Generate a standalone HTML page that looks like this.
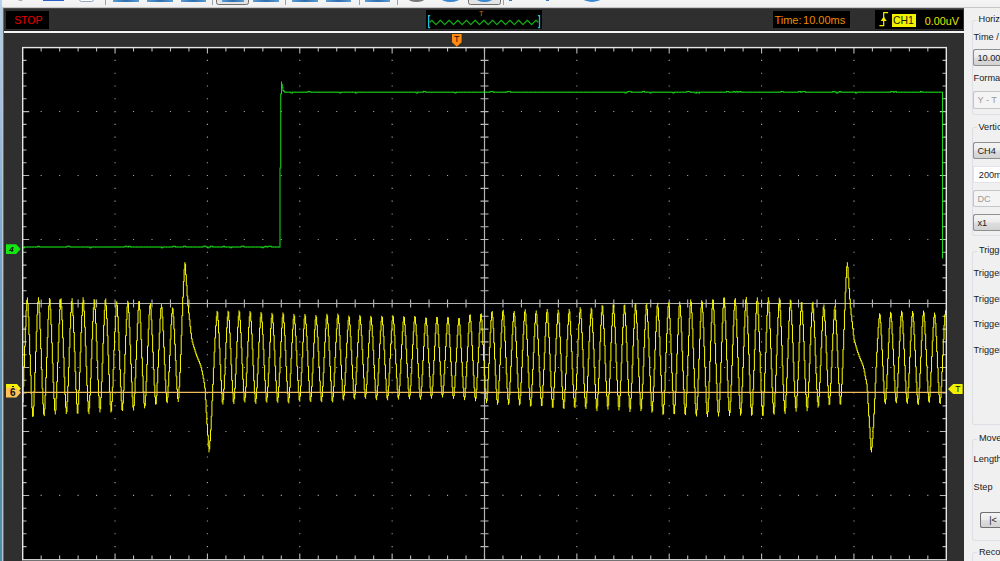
<!DOCTYPE html>
<html lang="en">
<head>
<meta charset="utf-8">
<title>Oscilloscope</title>
<style>
html,body{margin:0;padding:0;}
body{width:1000px;height:561px;overflow:hidden;background:#2f2f2f;position:relative;
 font-family:"Liberation Sans",sans-serif;font-size:9px;color:#000;}
.abs{position:absolute;}
#toolbar{left:0;top:0;width:1000px;height:9px;background:linear-gradient(#f5f5f5 0,#efefef 6.7px,#bdbdbd 7.7px,#4a4a4a 8.5px,#2f2f2f 9px);}
#toolbar i{position:absolute;display:block;}
#leftedge{left:0;top:0;width:2.0px;height:561px;background:linear-gradient(#b4d2ee 0%,#9cc0e2 20%,#78a4cc 45%,#5a94b4 70%,#4a8ea6 100%);}
#leftline{left:2.0px;top:8px;width:1.2px;height:553px;background:#bcc6ce;}
#leftline2{left:3.2px;top:8px;width:0.9px;height:553px;background:#686868;}
#hline{left:4px;top:31.4px;width:960px;height:1.6px;background:#f4f4f4;box-shadow:0 -0.7px 0 #1c1c1c;}
.blk{background:#000;}
#stop{left:5.9px;top:10.5px;width:43.3px;height:18.2px;}
#stop span{position:absolute;left:8.4px;top:3.4px;font-size:10.5px;line-height:12px;color:#e80000;letter-spacing:-0.1px;}
#mini{left:426px;top:9.6px;width:116px;height:19.3px;}
#mini span{position:absolute;left:52.9px;top:0.6px;font-size:7.2px;line-height:8px;color:#e06800;}
#time{left:772.5px;top:10.5px;width:77.5px;height:17.8px;}
#time span{position:absolute;left:1.9px;top:3.6px;font-size:11px;line-height:12px;color:#ee8a00;white-space:pre;}
#time span b{font-weight:normal;margin-left:1.6px;}
#trig{left:875px;top:9.7px;width:87.6px;height:19.4px;}
#ch1{left:16.6px;top:4.4px;width:24px;height:13px;background:#f2f200;}
#ch1 span{position:absolute;left:1.3px;top:0.9px;font-size:10.4px;line-height:12px;color:#202000;}
#uv{left:49.8px;top:5.3px;font-size:10.8px;line-height:12px;color:#e6e600;}
.mk{font-size:8px;line-height:9px;font-weight:bold;color:#101010;}
#panel{left:964.4px;top:8px;width:36px;height:553px;background:#f0f0f0;}
#pedge{left:963.6px;top:8px;width:2.6px;height:553px;background:linear-gradient(90deg,#9a9a9a,#fdfdfd 40%,#fdfdfd 70%,#f0f0f0);}
.grp{border:1px solid #dce0e4;border-right:none;border-radius:3px 0 0 3px;left:971.6px;width:40px;}
.lg{background:#f0f0f0;padding:0 1.5px;font-size:9.2px;line-height:10px;color:#1a1a1a;white-space:nowrap;}
.lb{font-size:9.2px;line-height:10px;color:#1a1a1a;white-space:nowrap;left:973.6px;}
.cb{left:973.2px;width:40px;height:17.6px;border:1px solid #8e8f8f;border-right:none;border-radius:2.5px 0 0 2.5px;
 background:linear-gradient(#f4f4f4 0%,#ececec 48%,#dedede 52%,#d2d2d2 100%);box-sizing:border-box;}
.cb span,.tf span{position:absolute;left:3.2px;top:3.1px;font-size:9.2px;line-height:10px;color:#1a1a1a;white-space:nowrap;}
.tf{left:973.2px;width:40px;height:16.8px;border:1px solid #e2e3ea;border-right:none;border-radius:2px 0 0 2px;background:#fff;box-sizing:border-box;}
.dis{left:973.2px;width:40px;height:17.6px;border:1px solid #c4c6c8;border-right:none;border-radius:2.5px 0 0 2.5px;background:#f4f4f4;box-sizing:border-box;}
.dis span{position:absolute;left:3.2px;top:3.2px;font-size:9.2px;line-height:10px;color:#9a9a9a;white-space:nowrap;}
</style>
</head>
<body>
<div id="toolbar" class="abs">
 <i style="left:17.5px;top:-2.6px;width:5px;height:4px;border-radius:50%;background:#a3a595;"></i>
 <i style="left:42.5px;top:0;width:21.5px;height:0.9px;background:#2f5fc8;"></i>
 <i style="left:79px;top:-3px;width:15.4px;height:4.6px;border:1px solid #93a5c0;border-radius:2.5px;box-sizing:border-box;background:#fff;"></i>
 <i style="left:105.4px;top:0;width:0.9px;height:4.6px;background:#a0a0a0;"></i>
 <i class="bi" style="left:112.5px;width:26px;"></i>
 <i class="bi" style="left:147px;width:25.5px;"></i>
 <i class="bi" style="left:180.5px;width:25.5px;"></i>
 <i style="left:212.3px;top:0;width:0.9px;height:4.6px;background:#a0a0a0;"></i>
 <i style="left:216px;top:-3px;width:32.8px;height:8.4px;border:1px solid #6e6e6e;border-radius:2.5px;box-sizing:border-box;background:#e4e4e4;"></i>
 <i class="bi" style="left:221.5px;width:22px;"></i>
 <i class="bi" style="left:253px;width:25.5px;"></i>
 <i style="left:284.8px;top:0;width:0.9px;height:4.6px;background:#a0a0a0;"></i>
 <i class="bi" style="left:292px;width:25.5px;"></i>
 <i class="bi" style="left:326px;width:25px;"></i>
 <i style="left:358.5px;top:0;width:0.9px;height:4.6px;background:#a0a0a0;"></i>
 <i class="bi" style="left:365px;width:25px;"></i>
 <i style="left:397px;top:0;width:0.9px;height:4.6px;background:#a0a0a0;"></i>
 <i style="left:407.5px;top:-6px;width:17.5px;height:7.6px;border-radius:50%;background:#767676;"></i>
 <i style="left:441px;top:-6px;width:19px;height:8.1px;border-radius:50%;background:#3a86d0;"></i>
 <i style="left:467.5px;top:-3px;width:33px;height:8.4px;border:1px solid #6e6e6e;border-radius:2.5px;box-sizing:border-box;background:#e4e4e4;"></i>
 <i style="left:476px;top:-6px;width:17px;height:8.1px;border-radius:50%;background:#3a86d0;"></i>
 <i style="left:503px;top:0;width:0.9px;height:4.6px;background:#a0a0a0;"></i>
 <i style="left:509px;top:0;width:3px;height:1.2px;background:#3a78c0;"></i>
 <i style="left:546px;top:0;width:3px;height:1.2px;background:#3a78c0;"></i>
 <i style="left:582.5px;top:-6px;width:18.5px;height:8.1px;border-radius:50%;background:#3a86d0;"></i>
</div>
<style>.bi{top:0;height:1.9px;background:linear-gradient(90deg,#5d9bd3,#2f6eb0 50%,#5d9bd3);}</style>
<div id="leftedge" class="abs"></div>
<div id="leftline" class="abs"></div>
<div id="leftline2" class="abs"></div>
<div id="hline" class="abs"></div>
<div id="stop" class="abs blk"><span>STOP</span></div>
<div id="mini" class="abs blk"><span>T</span></div>
<div id="time" class="abs blk"><span>Time:<b>10.00ms</b></span></div>
<div id="trig" class="abs blk">
 <div id="ch1" class="abs"><span>CH1</span></div>
 <div id="uv" class="abs">0.00uV</div>
</div>
<div class="abs" style="left:0;top:0;width:1000px;height:561px;">
<svg id="scope" width="1000" height="561" viewBox="0 0 1000 561">
<defs><clipPath id="pc"><rect x="22.7" y="47.6" width="923.6" height="511.8"/></clipPath></defs>
<rect x="22.7" y="47.6" width="923.6" height="513.4" fill="#000"/>
<path d="M114.51 60.39h1.1M114.51 73.19h1.1M114.51 85.98h1.1M114.51 98.78h1.1M114.51 111.58h1.1M114.51 124.37h1.1M114.51 137.16h1.1M114.51 149.96h1.1M114.51 162.75h1.1M114.51 175.55h1.1M114.51 188.34h1.1M114.51 201.14h1.1M114.51 213.93h1.1M114.51 226.73h1.1M114.51 239.52h1.1M114.51 252.32h1.1M114.51 265.11h1.1M114.51 277.91h1.1M114.51 290.7h1.1M114.51 303.5h1.1M114.51 316.3h1.1M114.51 329.09h1.1M114.51 341.88h1.1M114.51 354.68h1.1M114.51 367.47h1.1M114.51 380.27h1.1M114.51 393.06h1.1M114.51 405.86h1.1M114.51 418.65h1.1M114.51 431.45h1.1M114.51 444.25h1.1M114.51 457.04h1.1M114.51 469.83h1.1M114.51 482.63h1.1M114.51 495.43h1.1M114.51 508.22h1.1M114.51 521.01h1.1M114.51 533.81h1.1M114.51 546.6h1.1M206.87 60.39h1.1M206.87 73.19h1.1M206.87 85.98h1.1M206.87 98.78h1.1M206.87 111.58h1.1M206.87 124.37h1.1M206.87 137.16h1.1M206.87 149.96h1.1M206.87 162.75h1.1M206.87 175.55h1.1M206.87 188.34h1.1M206.87 201.14h1.1M206.87 213.93h1.1M206.87 226.73h1.1M206.87 239.52h1.1M206.87 252.32h1.1M206.87 265.11h1.1M206.87 277.91h1.1M206.87 290.7h1.1M206.87 303.5h1.1M206.87 316.3h1.1M206.87 329.09h1.1M206.87 341.88h1.1M206.87 354.68h1.1M206.87 367.47h1.1M206.87 380.27h1.1M206.87 393.06h1.1M206.87 405.86h1.1M206.87 418.65h1.1M206.87 431.45h1.1M206.87 444.25h1.1M206.87 457.04h1.1M206.87 469.83h1.1M206.87 482.63h1.1M206.87 495.43h1.1M206.87 508.22h1.1M206.87 521.01h1.1M206.87 533.81h1.1M206.87 546.6h1.1M299.23 60.39h1.1M299.23 73.19h1.1M299.23 85.98h1.1M299.23 98.78h1.1M299.23 111.58h1.1M299.23 124.37h1.1M299.23 137.16h1.1M299.23 149.96h1.1M299.23 162.75h1.1M299.23 175.55h1.1M299.23 188.34h1.1M299.23 201.14h1.1M299.23 213.93h1.1M299.23 226.73h1.1M299.23 239.52h1.1M299.23 252.32h1.1M299.23 265.11h1.1M299.23 277.91h1.1M299.23 290.7h1.1M299.23 303.5h1.1M299.23 316.3h1.1M299.23 329.09h1.1M299.23 341.88h1.1M299.23 354.68h1.1M299.23 367.47h1.1M299.23 380.27h1.1M299.23 393.06h1.1M299.23 405.86h1.1M299.23 418.65h1.1M299.23 431.45h1.1M299.23 444.25h1.1M299.23 457.04h1.1M299.23 469.83h1.1M299.23 482.63h1.1M299.23 495.43h1.1M299.23 508.22h1.1M299.23 521.01h1.1M299.23 533.81h1.1M299.23 546.6h1.1M391.59 60.39h1.1M391.59 73.19h1.1M391.59 85.98h1.1M391.59 98.78h1.1M391.59 111.58h1.1M391.59 124.37h1.1M391.59 137.16h1.1M391.59 149.96h1.1M391.59 162.75h1.1M391.59 175.55h1.1M391.59 188.34h1.1M391.59 201.14h1.1M391.59 213.93h1.1M391.59 226.73h1.1M391.59 239.52h1.1M391.59 252.32h1.1M391.59 265.11h1.1M391.59 277.91h1.1M391.59 290.7h1.1M391.59 303.5h1.1M391.59 316.3h1.1M391.59 329.09h1.1M391.59 341.88h1.1M391.59 354.68h1.1M391.59 367.47h1.1M391.59 380.27h1.1M391.59 393.06h1.1M391.59 405.86h1.1M391.59 418.65h1.1M391.59 431.45h1.1M391.59 444.25h1.1M391.59 457.04h1.1M391.59 469.83h1.1M391.59 482.63h1.1M391.59 495.43h1.1M391.59 508.22h1.1M391.59 521.01h1.1M391.59 533.81h1.1M391.59 546.6h1.1M576.31 60.39h1.1M576.31 73.19h1.1M576.31 85.98h1.1M576.31 98.78h1.1M576.31 111.58h1.1M576.31 124.37h1.1M576.31 137.16h1.1M576.31 149.96h1.1M576.31 162.75h1.1M576.31 175.55h1.1M576.31 188.34h1.1M576.31 201.14h1.1M576.31 213.93h1.1M576.31 226.73h1.1M576.31 239.52h1.1M576.31 252.32h1.1M576.31 265.11h1.1M576.31 277.91h1.1M576.31 290.7h1.1M576.31 303.5h1.1M576.31 316.3h1.1M576.31 329.09h1.1M576.31 341.88h1.1M576.31 354.68h1.1M576.31 367.47h1.1M576.31 380.27h1.1M576.31 393.06h1.1M576.31 405.86h1.1M576.31 418.65h1.1M576.31 431.45h1.1M576.31 444.25h1.1M576.31 457.04h1.1M576.31 469.83h1.1M576.31 482.63h1.1M576.31 495.43h1.1M576.31 508.22h1.1M576.31 521.01h1.1M576.31 533.81h1.1M576.31 546.6h1.1M668.67 60.39h1.1M668.67 73.19h1.1M668.67 85.98h1.1M668.67 98.78h1.1M668.67 111.58h1.1M668.67 124.37h1.1M668.67 137.16h1.1M668.67 149.96h1.1M668.67 162.75h1.1M668.67 175.55h1.1M668.67 188.34h1.1M668.67 201.14h1.1M668.67 213.93h1.1M668.67 226.73h1.1M668.67 239.52h1.1M668.67 252.32h1.1M668.67 265.11h1.1M668.67 277.91h1.1M668.67 290.7h1.1M668.67 303.5h1.1M668.67 316.3h1.1M668.67 329.09h1.1M668.67 341.88h1.1M668.67 354.68h1.1M668.67 367.47h1.1M668.67 380.27h1.1M668.67 393.06h1.1M668.67 405.86h1.1M668.67 418.65h1.1M668.67 431.45h1.1M668.67 444.25h1.1M668.67 457.04h1.1M668.67 469.83h1.1M668.67 482.63h1.1M668.67 495.43h1.1M668.67 508.22h1.1M668.67 521.01h1.1M668.67 533.81h1.1M668.67 546.6h1.1M761.03 60.39h1.1M761.03 73.19h1.1M761.03 85.98h1.1M761.03 98.78h1.1M761.03 111.58h1.1M761.03 124.37h1.1M761.03 137.16h1.1M761.03 149.96h1.1M761.03 162.75h1.1M761.03 175.55h1.1M761.03 188.34h1.1M761.03 201.14h1.1M761.03 213.93h1.1M761.03 226.73h1.1M761.03 239.52h1.1M761.03 252.32h1.1M761.03 265.11h1.1M761.03 277.91h1.1M761.03 290.7h1.1M761.03 303.5h1.1M761.03 316.3h1.1M761.03 329.09h1.1M761.03 341.88h1.1M761.03 354.68h1.1M761.03 367.47h1.1M761.03 380.27h1.1M761.03 393.06h1.1M761.03 405.86h1.1M761.03 418.65h1.1M761.03 431.45h1.1M761.03 444.25h1.1M761.03 457.04h1.1M761.03 469.83h1.1M761.03 482.63h1.1M761.03 495.43h1.1M761.03 508.22h1.1M761.03 521.01h1.1M761.03 533.81h1.1M761.03 546.6h1.1M853.39 60.39h1.1M853.39 73.19h1.1M853.39 85.98h1.1M853.39 98.78h1.1M853.39 111.58h1.1M853.39 124.37h1.1M853.39 137.16h1.1M853.39 149.96h1.1M853.39 162.75h1.1M853.39 175.55h1.1M853.39 188.34h1.1M853.39 201.14h1.1M853.39 213.93h1.1M853.39 226.73h1.1M853.39 239.52h1.1M853.39 252.32h1.1M853.39 265.11h1.1M853.39 277.91h1.1M853.39 290.7h1.1M853.39 303.5h1.1M853.39 316.3h1.1M853.39 329.09h1.1M853.39 341.88h1.1M853.39 354.68h1.1M853.39 367.47h1.1M853.39 380.27h1.1M853.39 393.06h1.1M853.39 405.86h1.1M853.39 418.65h1.1M853.39 431.45h1.1M853.39 444.25h1.1M853.39 457.04h1.1M853.39 469.83h1.1M853.39 482.63h1.1M853.39 495.43h1.1M853.39 508.22h1.1M853.39 521.01h1.1M853.39 533.81h1.1M853.39 546.6h1.1M40.62 111.57h1.1M59.09 111.57h1.1M77.57 111.57h1.1M96.04 111.57h1.1M132.98 111.57h1.1M151.45 111.57h1.1M169.93 111.57h1.1M188.4 111.57h1.1M225.34 111.57h1.1M243.81 111.57h1.1M262.29 111.57h1.1M280.76 111.57h1.1M317.7 111.57h1.1M336.17 111.57h1.1M354.65 111.57h1.1M373.12 111.57h1.1M410.06 111.57h1.1M428.53 111.57h1.1M447.01 111.57h1.1M465.48 111.57h1.1M502.42 111.57h1.1M520.89 111.57h1.1M539.37 111.57h1.1M557.84 111.57h1.1M594.78 111.57h1.1M613.25 111.57h1.1M631.73 111.57h1.1M650.2 111.57h1.1M687.14 111.57h1.1M705.61 111.57h1.1M724.09 111.57h1.1M742.56 111.57h1.1M779.5 111.57h1.1M797.97 111.57h1.1M816.45 111.57h1.1M834.92 111.57h1.1M871.86 111.57h1.1M890.33 111.57h1.1M908.81 111.57h1.1M927.28 111.57h1.1M40.62 175.55h1.1M59.09 175.55h1.1M77.57 175.55h1.1M96.04 175.55h1.1M132.98 175.55h1.1M151.45 175.55h1.1M169.93 175.55h1.1M188.4 175.55h1.1M225.34 175.55h1.1M243.81 175.55h1.1M262.29 175.55h1.1M280.76 175.55h1.1M317.7 175.55h1.1M336.17 175.55h1.1M354.65 175.55h1.1M373.12 175.55h1.1M410.06 175.55h1.1M428.53 175.55h1.1M447.01 175.55h1.1M465.48 175.55h1.1M502.42 175.55h1.1M520.89 175.55h1.1M539.37 175.55h1.1M557.84 175.55h1.1M594.78 175.55h1.1M613.25 175.55h1.1M631.73 175.55h1.1M650.2 175.55h1.1M687.14 175.55h1.1M705.61 175.55h1.1M724.09 175.55h1.1M742.56 175.55h1.1M779.5 175.55h1.1M797.97 175.55h1.1M816.45 175.55h1.1M834.92 175.55h1.1M871.86 175.55h1.1M890.33 175.55h1.1M908.81 175.55h1.1M927.28 175.55h1.1M40.62 239.52h1.1M59.09 239.52h1.1M77.57 239.52h1.1M96.04 239.52h1.1M132.98 239.52h1.1M151.45 239.52h1.1M169.93 239.52h1.1M188.4 239.52h1.1M225.34 239.52h1.1M243.81 239.52h1.1M262.29 239.52h1.1M280.76 239.52h1.1M317.7 239.52h1.1M336.17 239.52h1.1M354.65 239.52h1.1M373.12 239.52h1.1M410.06 239.52h1.1M428.53 239.52h1.1M447.01 239.52h1.1M465.48 239.52h1.1M502.42 239.52h1.1M520.89 239.52h1.1M539.37 239.52h1.1M557.84 239.52h1.1M594.78 239.52h1.1M613.25 239.52h1.1M631.73 239.52h1.1M650.2 239.52h1.1M687.14 239.52h1.1M705.61 239.52h1.1M724.09 239.52h1.1M742.56 239.52h1.1M779.5 239.52h1.1M797.97 239.52h1.1M816.45 239.52h1.1M834.92 239.52h1.1M871.86 239.52h1.1M890.33 239.52h1.1M908.81 239.52h1.1M927.28 239.52h1.1M40.62 367.48h1.1M59.09 367.48h1.1M77.57 367.48h1.1M96.04 367.48h1.1M132.98 367.48h1.1M151.45 367.48h1.1M169.93 367.48h1.1M188.4 367.48h1.1M225.34 367.48h1.1M243.81 367.48h1.1M262.29 367.48h1.1M280.76 367.48h1.1M317.7 367.48h1.1M336.17 367.48h1.1M354.65 367.48h1.1M373.12 367.48h1.1M410.06 367.48h1.1M428.53 367.48h1.1M447.01 367.48h1.1M465.48 367.48h1.1M502.42 367.48h1.1M520.89 367.48h1.1M539.37 367.48h1.1M557.84 367.48h1.1M594.78 367.48h1.1M613.25 367.48h1.1M631.73 367.48h1.1M650.2 367.48h1.1M687.14 367.48h1.1M705.61 367.48h1.1M724.09 367.48h1.1M742.56 367.48h1.1M779.5 367.48h1.1M797.97 367.48h1.1M816.45 367.48h1.1M834.92 367.48h1.1M871.86 367.48h1.1M890.33 367.48h1.1M908.81 367.48h1.1M927.28 367.48h1.1M40.62 431.45h1.1M59.09 431.45h1.1M77.57 431.45h1.1M96.04 431.45h1.1M132.98 431.45h1.1M151.45 431.45h1.1M169.93 431.45h1.1M188.4 431.45h1.1M225.34 431.45h1.1M243.81 431.45h1.1M262.29 431.45h1.1M280.76 431.45h1.1M317.7 431.45h1.1M336.17 431.45h1.1M354.65 431.45h1.1M373.12 431.45h1.1M410.06 431.45h1.1M428.53 431.45h1.1M447.01 431.45h1.1M465.48 431.45h1.1M502.42 431.45h1.1M520.89 431.45h1.1M539.37 431.45h1.1M557.84 431.45h1.1M594.78 431.45h1.1M613.25 431.45h1.1M631.73 431.45h1.1M650.2 431.45h1.1M687.14 431.45h1.1M705.61 431.45h1.1M724.09 431.45h1.1M742.56 431.45h1.1M779.5 431.45h1.1M797.97 431.45h1.1M816.45 431.45h1.1M834.92 431.45h1.1M871.86 431.45h1.1M890.33 431.45h1.1M908.81 431.45h1.1M927.28 431.45h1.1M40.62 495.42h1.1M59.09 495.42h1.1M77.57 495.42h1.1M96.04 495.42h1.1M132.98 495.42h1.1M151.45 495.42h1.1M169.93 495.42h1.1M188.4 495.42h1.1M225.34 495.42h1.1M243.81 495.42h1.1M262.29 495.42h1.1M280.76 495.42h1.1M317.7 495.42h1.1M336.17 495.42h1.1M354.65 495.42h1.1M373.12 495.42h1.1M410.06 495.42h1.1M428.53 495.42h1.1M447.01 495.42h1.1M465.48 495.42h1.1M502.42 495.42h1.1M520.89 495.42h1.1M539.37 495.42h1.1M557.84 495.42h1.1M594.78 495.42h1.1M613.25 495.42h1.1M631.73 495.42h1.1M650.2 495.42h1.1M687.14 495.42h1.1M705.61 495.42h1.1M724.09 495.42h1.1M742.56 495.42h1.1M779.5 495.42h1.1M797.97 495.42h1.1M816.45 495.42h1.1M834.92 495.42h1.1M871.86 495.42h1.1M890.33 495.42h1.1M908.81 495.42h1.1M927.28 495.42h1.1" stroke="#a8a8a8" stroke-width="1.1" fill="none"/>
<path d="M22.7 303.5H946.3M484.5 47.6V559.4" stroke="#b4b4b4" stroke-width="1.2" fill="none"/>
<path d="M41.17 47.6v3.8M41.17 559.4v-3.8M41.17 299.5v8M59.64 47.6v3.8M59.64 559.4v-3.8M59.64 299.5v8M78.12 47.6v3.8M78.12 559.4v-3.8M78.12 299.5v8M96.59 47.6v3.8M96.59 559.4v-3.8M96.59 299.5v8M115.06 47.6v6M115.06 559.4v-6M115.06 299.5v8M133.53 47.6v3.8M133.53 559.4v-3.8M133.53 299.5v8M152 47.6v3.8M152 559.4v-3.8M152 299.5v8M170.48 47.6v3.8M170.48 559.4v-3.8M170.48 299.5v8M188.95 47.6v3.8M188.95 559.4v-3.8M188.95 299.5v8M207.42 47.6v6M207.42 559.4v-6M207.42 299.5v8M225.89 47.6v3.8M225.89 559.4v-3.8M225.89 299.5v8M244.36 47.6v3.8M244.36 559.4v-3.8M244.36 299.5v8M262.84 47.6v3.8M262.84 559.4v-3.8M262.84 299.5v8M281.31 47.6v3.8M281.31 559.4v-3.8M281.31 299.5v8M299.78 47.6v6M299.78 559.4v-6M299.78 299.5v8M318.25 47.6v3.8M318.25 559.4v-3.8M318.25 299.5v8M336.72 47.6v3.8M336.72 559.4v-3.8M336.72 299.5v8M355.2 47.6v3.8M355.2 559.4v-3.8M355.2 299.5v8M373.67 47.6v3.8M373.67 559.4v-3.8M373.67 299.5v8M392.14 47.6v6M392.14 559.4v-6M392.14 299.5v8M410.61 47.6v3.8M410.61 559.4v-3.8M410.61 299.5v8M429.08 47.6v3.8M429.08 559.4v-3.8M429.08 299.5v8M447.56 47.6v3.8M447.56 559.4v-3.8M447.56 299.5v8M466.03 47.6v3.8M466.03 559.4v-3.8M466.03 299.5v8M484.5 47.6v6M484.5 559.4v-6M484.5 299.5v8M502.97 47.6v3.8M502.97 559.4v-3.8M502.97 299.5v8M521.44 47.6v3.8M521.44 559.4v-3.8M521.44 299.5v8M539.92 47.6v3.8M539.92 559.4v-3.8M539.92 299.5v8M558.39 47.6v3.8M558.39 559.4v-3.8M558.39 299.5v8M576.86 47.6v6M576.86 559.4v-6M576.86 299.5v8M595.33 47.6v3.8M595.33 559.4v-3.8M595.33 299.5v8M613.8 47.6v3.8M613.8 559.4v-3.8M613.8 299.5v8M632.28 47.6v3.8M632.28 559.4v-3.8M632.28 299.5v8M650.75 47.6v3.8M650.75 559.4v-3.8M650.75 299.5v8M669.22 47.6v6M669.22 559.4v-6M669.22 299.5v8M687.69 47.6v3.8M687.69 559.4v-3.8M687.69 299.5v8M706.16 47.6v3.8M706.16 559.4v-3.8M706.16 299.5v8M724.64 47.6v3.8M724.64 559.4v-3.8M724.64 299.5v8M743.11 47.6v3.8M743.11 559.4v-3.8M743.11 299.5v8M761.58 47.6v6M761.58 559.4v-6M761.58 299.5v8M780.05 47.6v3.8M780.05 559.4v-3.8M780.05 299.5v8M798.52 47.6v3.8M798.52 559.4v-3.8M798.52 299.5v8M817 47.6v3.8M817 559.4v-3.8M817 299.5v8M835.47 47.6v3.8M835.47 559.4v-3.8M835.47 299.5v8M853.94 47.6v6M853.94 559.4v-6M853.94 299.5v8M872.41 47.6v3.8M872.41 559.4v-3.8M872.41 299.5v8M890.88 47.6v3.8M890.88 559.4v-3.8M890.88 299.5v8M909.36 47.6v3.8M909.36 559.4v-3.8M909.36 299.5v8M927.83 47.6v3.8M927.83 559.4v-3.8M927.83 299.5v8M22.7 60.39h3.8M946.3 60.39h-3.8M480.5 60.39h8M22.7 73.19h3.8M946.3 73.19h-3.8M480.5 73.19h8M22.7 85.98h3.8M946.3 85.98h-3.8M480.5 85.98h8M22.7 98.78h3.8M946.3 98.78h-3.8M480.5 98.78h8M22.7 111.58h6.5M946.3 111.58h-6.5M480.5 111.58h8M22.7 124.37h3.8M946.3 124.37h-3.8M480.5 124.37h8M22.7 137.16h3.8M946.3 137.16h-3.8M480.5 137.16h8M22.7 149.96h3.8M946.3 149.96h-3.8M480.5 149.96h8M22.7 162.75h3.8M946.3 162.75h-3.8M480.5 162.75h8M22.7 175.55h6.5M946.3 175.55h-6.5M480.5 175.55h8M22.7 188.34h3.8M946.3 188.34h-3.8M480.5 188.34h8M22.7 201.14h3.8M946.3 201.14h-3.8M480.5 201.14h8M22.7 213.93h3.8M946.3 213.93h-3.8M480.5 213.93h8M22.7 226.73h3.8M946.3 226.73h-3.8M480.5 226.73h8M22.7 239.52h6.5M946.3 239.52h-6.5M480.5 239.52h8M22.7 252.32h3.8M946.3 252.32h-3.8M480.5 252.32h8M22.7 265.11h3.8M946.3 265.11h-3.8M480.5 265.11h8M22.7 277.91h3.8M946.3 277.91h-3.8M480.5 277.91h8M22.7 290.7h3.8M946.3 290.7h-3.8M480.5 290.7h8M22.7 303.5h6.5M946.3 303.5h-6.5M480.5 303.5h8M22.7 316.3h3.8M946.3 316.3h-3.8M480.5 316.3h8M22.7 329.09h3.8M946.3 329.09h-3.8M480.5 329.09h8M22.7 341.88h3.8M946.3 341.88h-3.8M480.5 341.88h8M22.7 354.68h3.8M946.3 354.68h-3.8M480.5 354.68h8M22.7 367.47h6.5M946.3 367.47h-6.5M480.5 367.47h8M22.7 380.27h3.8M946.3 380.27h-3.8M480.5 380.27h8M22.7 393.06h3.8M946.3 393.06h-3.8M480.5 393.06h8M22.7 405.86h3.8M946.3 405.86h-3.8M480.5 405.86h8M22.7 418.65h3.8M946.3 418.65h-3.8M480.5 418.65h8M22.7 431.45h6.5M946.3 431.45h-6.5M480.5 431.45h8M22.7 444.25h3.8M946.3 444.25h-3.8M480.5 444.25h8M22.7 457.04h3.8M946.3 457.04h-3.8M480.5 457.04h8M22.7 469.83h3.8M946.3 469.83h-3.8M480.5 469.83h8M22.7 482.63h3.8M946.3 482.63h-3.8M480.5 482.63h8M22.7 495.43h6.5M946.3 495.43h-6.5M480.5 495.43h8M22.7 508.22h3.8M946.3 508.22h-3.8M480.5 508.22h8M22.7 521.01h3.8M946.3 521.01h-3.8M480.5 521.01h8M22.7 533.81h3.8M946.3 533.81h-3.8M480.5 533.81h8M22.7 546.6h3.8M946.3 546.6h-3.8M480.5 546.6h8" stroke="#b8b8b8" stroke-width="1.1" fill="none"/>
<path d="M23.06 246.5V248.25M23.79 247.25V248.25M24.52 246.5V248.25M25.26 246.5V247.5M25.99 246.5V247.5M26.72 246.5V247.5M27.45 246.5V247.5M28.18 246.5V247.5M28.92 246.5V247.5M29.65 246.5V247.5M30.38 246.5V247.5M31.11 246.5V247.5M31.84 246.5V247.5M32.58 246.5V247.5M33.31 246.5V247.5M34.04 246.5V247.5M34.77 246.5V247.5M35.51 246.5V247.5M36.24 246.5V247.5M36.97 246.5V247.5M37.7 245.9V247.5M38.43 245.75V246.9M39.17 245.75V247.35M39.9 246.35V247.5M40.63 246.5V247.5M41.36 246.5V247.5M42.09 246.5V247.5M42.83 246.5V247.5M43.56 246.5V247.5M44.29 246.5V247.5M45.02 246.5V247.5M45.75 246.5V247.5M46.49 246.5V247.5M47.22 246.5V247.5M47.95 246.5V247.5M48.68 246.5V247.5M49.41 246.5V247.5M50.15 246.5V247.5M50.88 246.5V247.5M51.61 246.5V247.5M52.34 246.5V247.5M53.07 246.5V247.5M53.81 246.5V247.5M54.54 246.5V247.5M55.27 246.5V247.5M56 246.5V247.5M56.73 246.5V247.5M57.47 246.5V247.5M58.2 246.5V247.5M58.93 246.5V247.5M59.66 246.5V247.5M60.4 246.5V247.5M61.13 246.5V247.5M61.86 246.5V247.5M62.59 246.5V247.5M63.32 246.5V247.5M64.06 246.5V247.5M64.79 246.5V247.5M65.52 246.5V247.5M66.25 246.5V247.5M66.98 245.75V247.5M67.72 245.75V246.75M68.45 245.75V246.75M69.18 245.75V246.75M69.91 245.75V247.5M70.64 246.5V247.5M71.38 246.5V247.5M72.11 246.5V247.5M72.84 246.5V247.5M73.57 246.5V247.5M74.3 246.5V247.5M75.04 246.5V247.5M75.77 246.5V247.5M76.5 246.5V247.5M77.23 246.5V247.5M77.96 246.5V247.5M78.7 246.5V247.5M79.43 246.5V247.5M80.16 246.5V247.5M80.89 246.5V247.5M81.63 246.5V247.5M82.36 246.5V247.5M83.09 246.5V247.5M83.82 246.5V247.5M84.55 246.5V247.5M85.29 246.5V247.5M86.02 246.5V247.5M86.75 246.5V247.5M87.48 246.5V247.5M88.21 246.5V247.5M88.95 246.5V247.5M89.68 246.5V248.25M90.41 247.25V248.25M91.14 246.5V248.25M91.87 246.5V247.5M92.61 246.5V247.5M93.34 246.5V247.5M94.07 246.5V247.5M94.8 246.5V247.5M95.53 246.5V247.5M96.27 246.5V247.5M97 246.5V247.5M97.73 246.5V247.5M98.46 246.5V247.5M99.19 246.5V247.5M99.93 246.5V247.5M100.66 246.5V247.5M101.39 246.5V247.5M102.12 246.5V247.5M102.86 246.5V247.5M103.59 246.5V247.5M104.32 246.5V247.5M105.05 246.5V247.5M105.78 246.5V247.5M106.52 246.5V247.5M107.25 246.5V247.5M107.98 246.5V247.5M108.71 246.5V247.5M109.44 246.5V247.5M110.18 246.5V247.5M110.91 246.5V247.5M111.64 246.5V247.5M112.37 246.5V247.5M113.1 246.5V247.5M113.84 246.5V247.5M114.57 246.5V247.5M115.3 246.5V247.5M116.03 246.5V247.5M116.76 246.5V247.5M117.5 246.5V247.5M118.23 246.5V247.5M118.96 246.5V247.5M119.69 246.5V247.5M120.42 246.5V247.5M121.16 246.5V247.5M121.89 246.5V247.5M122.62 246.5V247.5M123.35 246.5V247.5M124.08 246.5V247.5M124.82 245.9V247.5M125.55 245.75V246.9M126.28 245.75V246.75M127.01 245.75V247.35M127.75 246.35V247.5M128.48 245.9V247.5M129.21 245.75V246.9M129.94 245.75V247.2M130.67 246.2V247.5M131.41 246.5V247.5M132.14 246.5V247.5M132.87 246.5V247.5M133.6 246.5V247.5M134.33 246.5V247.5M135.07 246.5V247.5M135.8 246.5V247.5M136.53 246.5V247.5M137.26 246.5V247.5M137.99 246.5V247.5M138.73 246.5V247.5M139.46 246.5V247.5M140.19 246.5V247.5M140.92 246.5V247.5M141.65 246.5V247.5M142.39 246.5V247.5M143.12 246.5V247.5M143.85 246.5V247.5M144.58 246.5V247.5M145.31 246.5V247.5M146.05 246.5V247.5M146.78 246.5V247.5M147.51 246.5V247.5M148.24 246.5V247.5M148.98 246.5V247.5M149.71 246.5V247.5M150.44 246.5V247.5M151.17 246.5V247.5M151.9 246.5V247.5M152.64 246.5V247.5M153.37 246.5V247.5M154.1 246.5V247.5M154.83 246.5V247.5M155.56 246.5V247.5M156.3 246.5V247.5M157.03 246.5V247.5M157.76 246.5V247.5M158.49 246.5V247.5M159.22 246.5V247.5M159.96 246.5V247.5M160.69 246.5V247.5M161.42 246.5V248.25M162.15 247.25V248.25M162.88 246.5V248.25M163.62 246.5V247.5M164.35 246.5V247.5M165.08 246.5V247.5M165.81 246.5V247.5M166.54 246.5V247.5M167.28 246.5V247.5M168.01 246.5V247.5M168.74 246.5V247.5M169.47 246.5V247.5M170.2 246.5V247.5M170.94 246.5V247.5M171.67 246.5V247.5M172.4 246.35V247.5M173.13 245.75V247.35M173.87 245.75V246.75M174.6 245.75V246.9M175.33 245.9V247.5M176.06 246.5V247.5M176.79 246.5V247.5M177.53 246.5V247.5M178.26 246.5V247.5M178.99 246.5V247.5M179.72 246.5V247.5M180.45 246.5V247.5M181.19 246.5V247.5M181.92 246.5V247.5M182.65 246.5V247.5M183.38 245.9V247.5M184.11 245.75V246.9M184.85 245.75V246.75M185.58 245.75V247.35M186.31 246.35V247.5M187.04 246.5V247.5M187.77 246.5V247.5M188.51 246.5V247.5M189.24 246.5V247.5M189.97 246.5V247.5M190.7 246.5V247.5M191.43 246.5V247.5M192.17 246.5V247.5M192.9 246.5V247.5M193.63 246.5V247.5M194.36 246.5V247.5M195.1 246.5V247.5M195.83 246.5V247.5M196.56 246.5V247.5M197.29 246.5V247.5M198.02 246.5V247.5M198.76 246.5V247.5M199.49 246.5V247.5M200.22 246.5V247.5M200.95 246.5V247.5M201.68 246.5V247.5M202.42 246.5V247.5M203.15 245.75V247.5M203.88 245.75V246.75M204.61 245.75V246.75M205.34 245.75V246.75M206.08 245.75V247.5M206.81 246.5V247.5M207.54 246.5V248.25M208.27 247.25V248.25M209 246.5V248.25M209.74 246.5V247.5M210.47 245.75V247.5M211.2 245.75V246.75M211.93 245.75V246.75M212.66 245.75V247.5M213.4 246.5V247.5M214.13 246.5V247.5M214.86 246.5V247.5M215.59 246.5V247.5M216.33 246.5V247.5M217.06 246.5V247.5M217.79 246.5V247.5M218.52 246.5V247.5M219.25 246.5V247.5M219.99 246.5V247.5M220.72 246.5V247.5M221.45 246.5V247.5M222.18 246.5V247.5M222.91 245.9V247.5M223.65 245.75V246.9M224.38 245.75V247.35M225.11 246.35V247.5M225.84 246.5V247.5M226.57 246.5V247.5M227.31 246.5V247.5M228.04 246.5V247.5M228.77 246.5V247.5M229.5 246.5V247.5M230.23 246.5V248.25M230.97 247.1V248.25M231.7 246.5V248.1M232.43 246.5V247.5M233.16 246.5V247.5M233.89 246.5V247.5M234.63 246.5V247.5M235.36 246.5V247.5M236.09 246.5V247.5M236.82 246.5V247.5M237.55 246.5V247.5M238.29 246.5V247.5M239.02 246.5V247.5M239.75 246.5V247.5M240.48 246.5V247.5M241.22 245.75V247.5M241.95 245.75V246.75M242.68 245.75V246.75M243.41 245.75V246.75M244.14 245.75V247.5M244.88 246.5V247.5M245.61 246.5V247.5M246.34 246.5V247.5M247.07 246.5V247.5M247.8 246.5V247.5M248.54 246.5V247.5M249.27 246.5V247.5M250 246.5V247.5M250.73 246.5V247.5M251.46 246.5V247.5M252.2 246.5V247.5M252.93 246.5V247.5M253.66 246.5V247.5M254.39 246.5V247.5M255.12 246.5V247.5M255.86 246.5V247.5M256.59 246.5V247.5M257.32 246.5V247.5M258.05 246.5V247.5M258.78 246.5V247.5M259.52 246.5V247.5M260.25 246.5V247.5M260.98 246.5V247.5M261.71 246.5V247.95M262.45 246.95V248.25M263.18 246.65V248.25M263.91 246.5V247.65M264.64 246.2V247.5M265.37 245.75V247.2M266.11 245.75V247.05M266.84 246.05V247.5M267.57 246.35V247.5M268.3 245.75V247.35M269.03 245.75V246.75M269.77 245.75V246.75M270.5 245.75V246.75M271.23 245.75V247.5M271.96 246.5V247.5M272.69 246.5V247.5M273.43 246.5V247.5M274.16 246.5V247.5M274.89 246.5V247.5M275.62 246.5V247.5M276.35 246.5V247.5M277.09 246.5V247.5M277.82 246.5V247.5M278.55 246.5V247.5M279.28 246.5V247.5M280.01 167.5V247.5M280.75 93.37V168.5M281.48 81.5V94.37M282.21 83.87V88.15M282.94 87.15V91M283.67 90V91.74M284.41 90.74V92.38M285.14 91.38V92.7M285.87 91.7V92.7M286.6 91.7V92.7M287.34 91.7V92.7M288.07 91.7V92.7M288.8 91.7V92.7M289.53 91.7V92.7M290.26 91.7V92.7M291 91.7V93.45M291.73 92.45V93.45M292.46 91.7V93.45M293.19 91.7V92.7M293.92 91.7V92.7M294.66 91.7V92.7M295.39 91.7V92.7M296.12 91.7V92.7M296.85 91.7V92.7M297.58 91.7V92.7M298.32 91.7V92.7M299.05 91.7V92.7M299.78 91.7V92.7M300.51 91.7V92.7M301.24 91.7V92.7M301.98 91.7V92.7M302.71 91.7V92.7M303.44 91.7V92.7M304.17 91.7V92.7M304.9 91.7V92.7M305.64 91.7V92.7M306.37 91.7V92.7M307.1 91.7V92.7M307.83 90.95V92.7M308.57 90.95V91.95M309.3 90.95V91.95M310.03 90.95V92.7M310.76 91.7V92.7M311.49 91.7V92.7M312.23 91.7V92.7M312.96 91.7V92.7M313.69 91.7V92.7M314.42 91.7V92.7M315.15 91.7V92.7M315.89 91.7V92.7M316.62 91.7V92.7M317.35 91.7V92.7M318.08 91.7V92.7M318.81 91.7V92.7M319.55 91.7V92.7M320.28 91.7V92.7M321.01 91.7V92.7M321.74 91.7V92.7M322.47 91.7V92.7M323.21 91.7V92.7M323.94 91.7V92.7M324.67 91.7V92.7M325.4 91.7V92.7M326.13 91.7V92.7M326.87 91.7V92.7M327.6 91.7V92.7M328.33 91.7V92.7M329.06 91.7V92.7M329.8 91.7V92.7M330.53 91.7V92.7M331.26 91.7V92.7M331.99 91.7V92.7M332.72 91.7V92.7M333.46 91.7V92.7M334.19 91.7V92.7M334.92 91.7V92.7M335.65 91.7V92.7M336.38 91.7V92.7M337.12 91.7V92.7M337.85 91.7V92.7M338.58 91.7V92.7M339.31 91.7V93.15M340.04 92.15V93.45M340.78 91.85V93.45M341.51 91.7V92.85M342.24 91.7V92.7M342.97 91.7V92.7M343.7 91.7V92.7M344.44 91.7V92.7M345.17 91.7V92.7M345.9 91.7V92.7M346.63 91.7V92.7M347.36 91.7V92.7M348.1 91.7V92.7M348.83 91.7V92.7M349.56 91.7V92.7M350.29 91.7V92.7M351.02 91.7V92.7M351.76 91.7V92.7M352.49 91.7V92.7M353.22 91.7V92.7M353.95 91.7V92.7M354.69 91.7V92.7M355.42 91.7V93.45M356.15 92.45V93.45M356.88 91.7V93.45M357.61 91.7V92.7M358.35 91.7V92.7M359.08 91.7V92.7M359.81 91.7V92.7M360.54 91.7V92.7M361.27 91.7V92.7M362.01 91.7V92.7M362.74 91.7V92.7M363.47 91.7V92.7M364.2 91.7V92.7M364.93 91.7V92.7M365.67 91.7V92.7M366.4 91.7V92.7M367.13 91.7V92.7M367.86 91.7V92.7M368.59 91.7V92.7M369.33 91.7V92.7M370.06 91.7V92.7M370.79 91.7V92.7M371.52 91.7V92.7M372.25 91.7V92.7M372.99 91.7V92.7M373.72 91.7V92.7M374.45 91.7V92.7M375.18 91.7V92.7M375.92 91.7V92.7M376.65 91.7V92.7M377.38 91.7V92.7M378.11 91.7V92.7M378.84 91.7V92.7M379.58 91.7V92.7M380.31 91.7V92.7M381.04 91.7V92.7M381.77 91.7V92.7M382.5 91.7V92.7M383.24 91.7V92.7M383.97 91.7V92.7M384.7 91.7V92.7M385.43 91.7V92.7M386.16 91.7V92.7M386.9 91.7V92.7M387.63 91.7V92.7M388.36 91.7V92.7M389.09 91.7V92.7M389.82 91.7V92.7M390.56 91.7V92.7M391.29 91.7V92.7M392.02 91.7V92.7M392.75 91.7V92.7M393.48 91.7V92.7M394.22 91.7V92.7M394.95 91.7V92.7M395.68 91.7V92.7M396.41 91.7V92.7M397.14 91.7V92.7M397.88 91.7V92.7M398.61 91.7V92.7M399.34 91.7V92.7M400.07 91.7V92.7M400.81 91.7V92.7M401.54 91.7V92.7M402.27 91.7V92.7M403 91.7V92.7M403.73 91.7V92.7M404.47 91.7V92.7M405.2 91.7V92.7M405.93 91.7V92.7M406.66 91.7V92.7M407.39 91.7V92.7M408.13 91.7V92.7M408.86 91.7V92.7M409.59 91.7V92.7M410.32 91.7V92.7M411.05 91.7V92.7M411.79 91.7V92.7M412.52 91.7V92.7M413.25 91.7V92.7M413.98 91.7V92.7M414.71 91.7V92.7M415.45 91.7V92.7M416.18 91.7V93.45M416.91 92.45V93.45M417.64 91.7V93.45M418.37 91.7V92.7M419.11 91.7V92.7M419.84 91.7V92.7M420.57 91.7V92.7M421.3 91.7V92.7M422.04 91.7V92.7M422.77 91.55V92.7M423.5 90.95V92.55M424.23 90.95V91.95M424.96 90.95V92.1M425.7 91.1V92.7M426.43 91.7V92.7M427.16 91.7V92.7M427.89 91.7V92.7M428.62 91.7V92.7M429.36 91.7V92.7M430.09 91.7V92.7M430.82 91.7V92.7M431.55 91.7V92.7M432.28 91.7V92.7M433.02 91.7V92.7M433.75 91.7V92.7M434.48 91.7V92.7M435.21 91.7V92.7M435.94 91.7V92.7M436.68 91.7V92.7M437.41 91.7V92.7M438.14 91.7V92.7M438.87 91.7V92.7M439.6 91.7V92.7M440.34 91.7V92.7M441.07 91.7V92.7M441.8 91.7V92.7M442.53 91.7V92.7M443.27 91.7V92.7M444 91.7V92.7M444.73 91.7V92.7M445.46 91.7V92.7M446.19 91.7V92.7M446.93 91.7V92.7M447.66 91.7V92.7M448.39 91.7V92.7M449.12 91.7V92.7M449.85 91.7V92.7M450.59 91.7V92.7M451.32 91.7V92.7M452.05 91.7V92.7M452.78 91.7V92.7M453.51 91.7V92.7M454.25 91.7V93M454.98 92V93.45M455.71 92.15V93.45M456.44 91.7V93.15M457.17 91.7V92.7M457.91 91.7V92.7M458.64 91.7V92.7M459.37 91.7V92.7M460.1 91.7V92.7M460.83 91.7V92.7M461.57 91.7V92.7M462.3 91.7V92.7M463.03 91.7V92.7M463.76 91.7V92.7M464.49 91.7V92.7M465.23 91.7V92.7M465.96 91.7V92.7M466.69 91.7V92.7M467.42 91.7V92.7M468.16 91.7V92.7M468.89 91.7V92.7M469.62 91.7V92.7M470.35 91.7V92.7M471.08 91.7V92.7M471.82 91.7V92.7M472.55 91.7V92.7M473.28 91.7V92.7M474.01 91.7V92.7M474.74 91.7V92.7M475.48 91.7V92.7M476.21 91.7V92.7M476.94 91.7V92.7M477.67 91.7V92.7M478.4 91.7V92.7M479.14 91.7V92.7M479.87 91.7V92.7M480.6 91.7V92.7M481.33 91.7V92.7M482.06 91.7V92.7M482.8 91.7V92.7M483.53 91.7V92.7M484.26 91.7V92.7M484.99 91.7V92.7M485.72 91.7V92.7M486.46 91.7V92.7M487.19 91.7V92.7M487.92 91.7V92.7M488.65 91.7V92.7M489.39 91.7V92.7M490.12 90.95V92.7M490.85 90.95V91.95M491.58 90.95V91.95M492.31 90.95V91.95M493.05 90.95V92.7M493.78 91.7V92.7M494.51 91.7V92.7M495.24 91.7V92.7M495.97 91.7V92.7M496.71 91.7V92.7M497.44 91.7V92.7M498.17 91.7V92.7M498.9 91.7V92.7M499.63 91.7V92.7M500.37 91.7V92.7M501.1 91.7V92.7M501.83 91.7V92.7M502.56 91.7V92.7M503.29 91.7V92.7M504.03 91.7V92.7M504.76 91.7V92.7M505.49 91.7V92.7M506.22 91.7V92.7M506.95 91.25V92.7M507.69 90.95V92.25M508.42 90.95V91.95M509.15 90.95V91.95M509.88 90.95V92.25M510.61 91.25V92.7M511.35 91.7V92.7M512.08 91.7V92.7M512.81 91.7V92.7M513.54 91.7V92.7M514.28 91.7V92.7M515.01 91.7V92.7M515.74 91.7V92.7M516.47 91.7V92.7M517.2 91.7V92.7M517.94 91.7V92.7M518.67 91.7V92.7M519.4 91.7V92.7M520.13 91.7V92.7M520.86 91.7V92.7M521.6 91.7V92.7M522.33 91.7V92.7M523.06 91.7V92.7M523.79 91.7V92.7M524.52 91.7V92.7M525.26 91.7V92.7M525.99 91.7V92.7M526.72 91.7V92.7M527.45 91.7V92.7M528.18 91.7V92.7M528.92 91.7V92.7M529.65 91.7V92.7M530.38 91.7V92.7M531.11 91.7V92.7M531.84 91.7V92.7M532.58 91.7V92.7M533.31 91.7V92.7M534.04 91.7V92.7M534.77 91.7V92.7M535.51 91.7V92.7M536.24 91.7V92.7M536.97 91.7V92.7M537.7 91.7V92.7M538.43 91.7V92.7M539.17 91.7V92.7M539.9 91.7V92.7M540.63 91.7V92.7M541.36 91.7V92.7M542.09 91.7V92.7M542.83 91.7V92.7M543.56 91.7V92.7M544.29 91.7V92.7M545.02 91.7V92.7M545.75 91.7V92.7M546.49 91.7V92.7M547.22 91.7V92.7M547.95 91.7V92.7M548.68 91.7V92.7M549.41 91.7V92.7M550.15 91.7V92.7M550.88 91.7V92.7M551.61 91.7V92.7M552.34 91.7V92.7M553.07 91.7V92.7M553.81 91.7V92.7M554.54 91.7V92.7M555.27 91.7V92.7M556 91.7V92.7M556.73 91.7V92.7M557.47 91.7V92.7M558.2 91.7V92.7M558.93 91.7V92.7M559.66 91.7V92.7M560.4 91.7V92.7M561.13 91.7V92.7M561.86 91.7V92.7M562.59 91.7V92.7M563.32 91.7V92.7M564.06 91.7V92.7M564.79 91.7V92.7M565.52 91.7V92.7M566.25 91.7V92.7M566.98 91.7V92.7M567.72 91.7V92.7M568.45 91.7V92.7M569.18 91.7V92.7M569.91 91.7V92.7M570.64 91.7V92.7M571.38 91.7V92.7M572.11 91.7V92.7M572.84 91.7V92.7M573.57 91.7V92.7M574.3 91.7V92.7M575.04 91.7V92.7M575.77 91.7V92.7M576.5 91.7V92.7M577.23 91.7V92.7M577.96 91.7V92.7M578.7 91.7V92.7M579.43 91.7V92.7M580.16 91.7V92.7M580.89 91.7V92.7M581.63 91.7V92.7M582.36 91.7V92.7M583.09 91.7V92.7M583.82 91.7V92.7M584.55 91.7V92.7M585.29 91.7V92.7M586.02 91.7V92.7M586.75 91.7V92.7M587.48 91.7V92.7M588.21 91.7V92.7M588.95 91.7V92.7M589.68 91.7V92.7M590.41 91.7V92.7M591.14 91.7V92.7M591.87 91.7V92.7M592.61 91.7V92.7M593.34 91.7V92.7M594.07 91.7V92.7M594.8 91.7V92.7M595.53 91.7V92.7M596.27 91.7V92.7M597 91.7V92.7M597.73 91.7V92.7M598.46 91.7V92.7M599.19 91.7V92.7M599.93 91.7V92.7M600.66 91.7V92.7M601.39 91.7V92.7M602.12 91.7V92.7M602.86 91.7V92.7M603.59 91.7V92.7M604.32 91.7V92.7M605.05 91.7V92.7M605.78 91.7V92.7M606.52 91.7V92.7M607.25 91.7V92.7M607.98 91.7V92.7M608.71 91.7V92.7M609.44 91.7V92.7M610.18 91.7V92.7M610.91 91.7V92.7M611.64 91.7V92.7M612.37 91.7V92.7M613.1 91.7V92.7M613.84 91.7V92.7M614.57 91.7V92.7M615.3 91.7V92.7M616.03 91.7V92.7M616.76 91.7V92.7M617.5 91.7V92.7M618.23 91.7V92.7M618.96 91.7V92.7M619.69 91.7V92.7M620.42 91.7V92.7M621.16 91.7V92.7M621.89 91.7V92.7M622.62 91.7V92.7M623.35 91.7V92.7M624.08 91.7V92.7M624.82 91.7V93.45M625.55 92.45V93.45M626.28 91.7V93.45M627.01 91.7V92.7M627.75 91.1V92.7M628.48 90.95V92.1M629.21 90.95V91.95M629.94 90.95V91.95M630.67 90.95V92.4M631.41 91.4V92.7M632.14 91.7V92.7M632.87 91.7V92.7M633.6 91.7V92.7M634.33 91.7V92.7M635.07 91.7V92.7M635.8 91.7V92.7M636.53 91.7V92.7M637.26 91.7V92.7M637.99 91.7V92.7M638.73 91.7V92.7M639.46 91.7V92.7M640.19 91.7V92.7M640.92 91.7V92.7M641.65 91.7V92.7M642.39 90.95V92.7M643.12 90.95V91.95M643.85 90.95V91.95M644.58 90.95V92.7M645.31 91.7V92.7M646.05 91.7V92.7M646.78 91.7V92.7M647.51 91.7V92.7M648.24 91.7V92.7M648.98 91.7V92.7M649.71 91.7V93.3M650.44 92.3V93.45M651.17 91.7V93.45M651.9 91.7V92.7M652.64 91.7V92.7M653.37 91.7V92.7M654.1 91.7V92.7M654.83 91.7V92.7M655.56 91.7V92.7M656.3 91.7V92.7M657.03 91.7V92.7M657.76 91.7V92.7M658.49 91.7V92.7M659.22 91.7V92.7M659.96 91.7V92.7M660.69 91.7V92.7M661.42 91.7V92.7M662.15 91.7V92.7M662.88 91.7V92.7M663.62 91.7V92.7M664.35 91.7V92.7M665.08 91.7V92.7M665.81 91.7V92.7M666.54 91.7V92.7M667.28 91.7V92.7M668.01 91.7V92.7M668.74 91.7V92.7M669.47 91.7V92.7M670.2 91.7V92.7M670.94 91.7V92.7M671.67 91.7V92.7M672.4 91.7V93M673.13 92V93.45M673.87 92V93.45M674.6 91.7V93M675.33 91.7V92.7M676.06 91.7V92.7M676.79 91.7V92.7M677.53 91.7V92.7M678.26 91.7V92.7M678.99 91.7V92.7M679.72 91.7V92.7M680.45 91.7V92.7M681.19 91.7V92.7M681.92 91.7V92.7M682.65 91.7V92.7M683.38 91.7V92.7M684.11 91.7V92.7M684.85 91.7V92.7M685.58 91.7V92.7M686.31 91.55V92.7M687.04 90.95V92.55M687.77 90.95V91.95M688.51 90.95V91.95M689.24 90.95V91.95M689.97 90.95V92.7M690.7 91.7V92.7M691.43 91.7V92.7M692.17 91.7V92.7M692.9 91.7V92.7M693.63 91.7V92.7M694.36 91.7V92.7M695.1 91.7V93.45M695.83 92.45V93.45M696.56 91.7V93.45M697.29 91.7V92.7M698.02 91.7V93.45M698.76 92.45V93.45M699.49 91.7V93.45M700.22 91.7V92.7M700.95 91.7V92.7M701.68 91.7V92.7M702.42 91.7V92.7M703.15 91.7V92.7M703.88 91.7V92.7M704.61 91.7V92.7M705.34 91.7V92.7M706.08 91.7V92.7M706.81 91.7V92.7M707.54 91.7V92.7M708.27 91.7V92.7M709 91.7V92.7M709.74 91.7V92.7M710.47 91.7V92.7M711.2 91.7V92.7M711.93 91.7V92.7M712.66 91.7V92.7M713.4 91.7V92.7M714.13 91.7V92.7M714.86 91.7V92.7M715.59 91.7V92.7M716.33 91.7V92.7M717.06 91.7V92.7M717.79 91.7V92.7M718.52 91.7V92.7M719.25 91.7V92.7M719.99 91.7V92.7M720.72 91.7V92.7M721.45 91.7V92.7M722.18 91.7V92.7M722.91 91.7V92.7M723.65 91.7V92.7M724.38 91.7V92.7M725.11 91.7V92.7M725.84 91.7V92.7M726.57 90.95V92.7M727.31 90.95V91.95M728.04 90.95V91.95M728.77 90.95V92.7M729.5 91.7V92.7M730.23 91.7V92.7M730.97 91.7V92.7M731.7 91.7V92.7M732.43 91.7V92.7M733.16 91.1V92.7M733.89 90.95V92.1M734.63 90.95V92.55M735.36 91.55V92.7M736.09 91.25V92.7M736.82 90.95V92.25M737.55 90.95V92.4M738.29 91.4V92.7M739.02 91.4V92.7M739.75 90.95V92.4M740.48 90.95V92.25M741.22 91.25V92.7M741.95 91.7V92.7M742.68 91.7V92.7M743.41 91.7V92.7M744.14 91.7V92.7M744.88 91.7V92.7M745.61 91.7V92.7M746.34 91.7V92.7M747.07 91.7V92.7M747.8 91.7V92.7M748.54 91.7V92.7M749.27 91.7V92.7M750 91.7V92.7M750.73 91.7V92.7M751.46 91.7V92.7M752.2 91.7V92.7M752.93 91.7V92.7M753.66 91.7V92.7M754.39 91.7V92.7M755.12 91.7V92.7M755.86 91.7V92.7M756.59 91.7V92.7M757.32 91.7V92.7M758.05 91.7V92.7M758.78 91.7V92.7M759.52 91.7V92.7M760.25 91.7V92.7M760.98 91.7V92.7M761.71 91.7V92.7M762.45 91.7V92.7M763.18 91.7V92.7M763.91 91.7V92.7M764.64 91.7V92.7M765.37 91.7V92.7M766.11 91.7V92.7M766.84 91.7V92.7M767.57 91.7V92.7M768.3 91.7V92.7M769.03 91.7V92.7M769.77 91.7V92.7M770.5 91.7V92.7M771.23 91.7V92.7M771.96 91.7V92.7M772.69 91.7V92.7M773.43 91.7V92.7M774.16 91.7V92.7M774.89 91.7V92.7M775.62 91.7V92.7M776.35 91.7V92.7M777.09 91.7V92.7M777.82 91.7V92.7M778.55 91.7V92.7M779.28 91.7V92.7M780.01 91.7V92.7M780.75 91.25V92.7M781.48 90.95V92.25M782.21 90.95V91.95M782.94 90.95V92.4M783.67 91.4V92.7M784.41 91.7V92.7M785.14 91.7V92.7M785.87 91.7V92.7M786.6 91.7V92.7M787.34 91.7V92.7M788.07 91.7V92.7M788.8 91.7V92.7M789.53 91.7V92.7M790.26 91.7V92.7M791 91.7V92.7M791.73 91.7V92.7M792.46 91.7V92.7M793.19 91.7V92.7M793.92 91.7V92.7M794.66 91.7V92.7M795.39 91.7V92.7M796.12 91.7V92.7M796.85 91.7V92.7M797.58 91.7V92.7M798.32 91.1V92.7M799.05 90.95V92.1M799.78 90.95V91.95M800.51 90.95V92.55M801.24 91.55V92.7M801.98 91.1V92.7M802.71 90.95V92.1M803.44 90.95V91.95M804.17 90.95V91.95M804.9 90.95V92.4M805.64 91.4V92.7M806.37 91.7V92.7M807.1 91.7V92.7M807.83 91.7V92.7M808.57 91.7V92.7M809.3 91.7V92.7M810.03 91.7V92.7M810.76 91.7V92.7M811.49 91.7V92.7M812.23 91.7V92.7M812.96 91.7V92.7M813.69 91.7V92.7M814.42 91.7V92.7M815.15 91.7V92.7M815.89 91.7V92.7M816.62 91.7V92.7M817.35 91.7V92.7M818.08 91.7V92.7M818.81 91.7V92.7M819.55 91.7V92.7M820.28 91.7V92.7M821.01 91.7V92.7M821.74 91.7V92.7M822.47 91.7V92.7M823.21 91.7V92.7M823.94 91.7V92.7M824.67 91.7V92.7M825.4 91.7V92.7M826.13 91.7V92.7M826.87 91.7V92.7M827.6 91.7V92.7M828.33 91.7V92.7M829.06 91.7V92.7M829.8 91.7V92.7M830.53 91.7V92.7M831.26 91.7V92.7M831.99 91.7V92.7M832.72 90.95V92.7M833.46 90.95V91.95M834.19 90.95V91.95M834.92 90.95V92.7M835.65 91.7V92.7M836.38 91.7V93.45M837.12 92.45V93.45M837.85 91.7V93.45M838.58 91.7V92.7M839.31 90.95V92.7M840.04 90.95V91.95M840.78 90.95V92.7M841.51 91.7V92.7M842.24 91.7V92.7M842.97 91.7V92.7M843.7 91.7V92.7M844.44 91.7V92.7M845.17 91.7V92.7M845.9 91.7V92.7M846.63 91.7V92.7M847.36 91.7V92.7M848.1 91.7V92.7M848.83 91.7V92.7M849.56 91.7V92.7M850.29 91.7V92.7M851.02 91.7V92.7M851.76 91.7V92.7M852.49 91.7V92.7M853.22 91.7V92.7M853.95 91.7V92.7M854.69 91.7V92.7M855.42 91.7V93.45M856.15 92.45V93.45M856.88 91.7V93.45M857.61 91.7V92.7M858.35 91.7V92.7M859.08 91.7V92.7M859.81 91.7V92.7M860.54 91.7V92.7M861.27 91.7V92.7M862.01 91.7V92.7M862.74 91.7V92.7M863.47 91.7V92.7M864.2 91.7V92.7M864.93 91.7V92.7M865.67 91.7V92.7M866.4 91.7V92.7M867.13 91.7V92.7M867.86 91.7V92.7M868.59 91.7V92.7M869.33 91.7V92.7M870.06 91.7V92.7M870.79 91.7V92.7M871.52 91.7V92.7M872.25 91.7V92.7M872.99 91.7V92.7M873.72 91.7V92.7M874.45 91.7V92.7M875.18 91.7V92.7M875.92 91.7V92.7M876.65 91.7V92.7M877.38 91.7V92.7M878.11 91.7V92.7M878.84 91.7V92.7M879.58 91.7V92.7M880.31 91.7V92.7M881.04 91.7V92.7M881.77 91.7V92.7M882.5 91.7V92.7M883.24 91.7V92.7M883.97 91.7V92.7M884.7 91.7V92.7M885.43 91.7V92.7M886.16 91.7V92.7M886.9 91.7V92.7M887.63 91.7V92.7M888.36 91.7V92.7M889.09 91.7V92.7M889.82 91.7V92.7M890.56 91.4V92.7M891.29 90.95V92.4M892.02 90.95V91.95M892.75 90.95V92.25M893.48 91.25V92.7M894.22 91.4V92.7M894.95 90.95V92.4M895.68 90.95V92.1M896.41 91.1V92.7M897.14 91.7V92.7M897.88 91.7V92.7M898.61 91.7V92.7M899.34 91.7V92.7M900.07 91.7V92.7M900.81 91.7V92.7M901.54 91.7V92.7M902.27 91.7V92.7M903 91.7V92.7M903.73 91.7V92.7M904.47 91.7V92.7M905.2 91.7V92.7M905.93 91.7V92.7M906.66 91.7V92.7M907.39 91.7V92.7M908.13 91.7V92.7M908.86 91.7V92.7M909.59 91.7V92.7M910.32 91.7V92.7M911.05 91.7V92.7M911.79 91.7V92.7M912.52 91.7V92.7M913.25 91.7V92.7M913.98 91.7V92.7M914.71 91.7V92.7M915.45 91.7V92.7M916.18 91.7V92.7M916.91 91.7V92.7M917.64 91.7V92.7M918.37 91.7V92.7M919.11 91.7V92.7M919.84 91.7V92.7M920.57 90.95V92.7M921.3 90.95V91.95M922.04 90.95V92.7M922.77 91.7V92.7M923.5 91.7V92.7M924.23 91.7V92.7M924.96 91.7V92.7M925.7 91.7V92.7M926.43 91.7V92.7M927.16 91.7V92.7M927.89 91.7V92.7M928.62 91.7V92.7M929.36 91.7V92.7M930.09 91.7V92.7M930.82 91.7V92.7M931.55 91.7V92.7M932.28 91.7V92.7M933.02 91.7V92.7M933.75 91.7V92.7M934.48 91.7V92.7M935.21 91.7V92.7M935.94 91.7V92.7M936.68 91.7V92.7M937.41 91.7V92.7M938.14 91.7V92.7M938.87 91.7V92.7M939.6 91.7V92.7M940.34 91.7V92.7M941.07 91.7V92.7M941.8 91.7V92.75M942.53 91.75V258.5" stroke="#1ce81c" stroke-width="0.95" fill="none"/>
<path d="M23.06 385.78V402.56M23.79 366.36V386.52M24.52 345.84V367.09M25.26 326.57V346.57M25.99 310.37V327.3M26.72 299.85V311.1M27.45 297.43V304.08M28.18 303.35V317.3M28.92 316.57V334.96M29.65 334.23V355.08M30.38 354.35V375.66M31.11 374.93V394.1M31.84 393.37V408.22M32.58 407.49V416.85M33.31 405.82V416.39M34.04 390.91V406.55M34.77 372.14V391.64M35.51 351.42V372.87M36.24 331.36V352.15M36.97 314.44V332.1M37.7 301.94V315.17M38.43 297.22V302.68M39.17 300.7V313.01M39.9 312.28V329.48M40.63 328.75V349.05M41.36 348.32V369.71M42.09 368.97V388.67M42.83 387.93V404.27M43.56 403.53V414.47M44.29 408.47V416.13M45.02 395V409.2M45.75 377.29V395.73M46.49 357.15V378.02M47.22 337V357.88M47.95 318.99V337.74M48.68 305.53V319.72M49.41 297.98V306.26M50.15 299.21V309.71M50.88 308.98V324.85M51.61 324.12V343.29M52.34 342.56V363.55M53.07 362.81V382.88M53.81 382.15V399.08M54.54 398.34V410.65M55.27 409.63V414.47M56 397.79V410.36M56.73 381.35V398.52M57.47 361.92V382.08M58.2 341.89V362.65M58.93 323.5V342.62M59.66 308.86V324.23M60.4 299.27V309.59M61.13 298.35V306.97M61.86 306.24V320.37M62.59 319.64V338.24M63.32 337.51V357.89M64.06 357.16V377.54M64.79 376.81V394.81M65.52 394.08V407.63M66.25 406.9V414M66.98 401.27V412.02M67.72 385.77V402M68.45 366.98V386.5M69.18 347V367.72M69.91 327.91V347.73M70.64 312.12V328.65M71.38 301.2V312.85M72.11 298.16V303.74M72.84 303.01V316.11M73.57 315.37V332.78M74.3 332.04V352.18M75.04 351.45V372.05M75.77 371.32V390.15M76.5 389.42V404.27M77.23 403.54V413.51M77.96 403.93V413.66M78.7 389.99V404.66M79.43 371.86V390.72M80.16 351.78V372.59M80.89 332.15V352.51M81.63 315.22V332.89M82.36 302.61V315.95M83.09 297.27V303.34M83.82 300.03V311.48M84.55 310.75V327.42M85.29 326.69V346.49M86.02 345.76V366.73M86.75 365.99V385.66M87.48 384.93V401.45M88.21 400.72V411.87M88.95 407.71V414.17M89.68 394.86V408.44M90.41 377.9V395.59M91.14 358.44V378.63M91.87 338.82V359.17M92.61 320.97V339.55M93.34 307.5V321.71M94.07 299.21V308.23M94.8 299.67V309.7M95.53 308.96V323.81M96.27 323.08V341.61M97 340.88V361.18M97.73 360.44V380.29M98.46 379.56V396.2M99.19 395.46V408.03M99.93 407.3V412.47M100.66 397.24V409.19M101.39 381.46V397.97M102.12 362.7V382.19M102.86 342.86V363.43M103.59 324.74V343.6M104.32 309.85V325.47M105.05 300.16V310.58M105.78 298.51V306.01M106.52 305.27V319.01M107.25 318.28V336.17M107.98 335.43V355.54M108.71 354.81V374.92M109.44 374.19V392.23M110.18 391.5V405.23M110.91 404.5V412.45M111.64 401.13V411.25M112.37 386.75V401.86M113.1 369.05V387.48M113.84 349.83V369.78M114.57 331.36V350.57M115.3 315.95V332.09M116.03 304.87V316.68M116.76 301.27V305.83M117.5 305.09V317.15M118.23 316.41V332.58M118.96 331.84V351.05M119.69 350.32V369.95M120.42 369.22V387.19M121.16 386.46V401.14M121.89 400.4V410.06M122.62 402.77V410.98M123.35 389.97V403.5M124.08 372.9V390.7M124.82 353.98V373.63M125.55 335.35V354.71M126.28 319.03V336.08M127.01 306.68V319.76M127.75 300.7V307.41M128.48 302.54V312.94M129.21 312.21V327.66M129.94 326.93V345.38M130.67 344.65V364.3M131.41 363.57V382.33M132.14 381.59V397.34M132.87 396.6V407.6M133.6 405.2V410.52M134.33 393.32V405.94M135.07 377.64V394.05M135.8 359.22V378.37M136.53 340.37V359.95M137.26 323.34V341.1M137.99 309.98V324.07M138.73 301.27V310.71M139.46 301.12V310.08M140.19 309.35V323.07M140.92 322.34V339.83M141.65 339.09V358.28M142.39 357.54V376.37M143.12 375.63V391.81M143.85 391.08V403.55M144.58 402.82V408.34M145.31 395.39V405.91M146.05 381.04V396.12M146.78 363.97V381.77M147.51 345.76V364.7M148.24 328.69V346.49M148.98 314.49V329.42M149.71 305.3V315.22M150.44 303.18V309.06M151.17 308.33V320.26M151.9 319.53V335.29M152.64 334.56V352.45M153.37 351.72V369.78M154.1 369.05V385.54M154.83 384.81V397.34M155.56 396.61V404.61M156.3 395.18V404.16M157.03 382.58V395.91M157.76 366.89V383.31M158.49 349.47V367.63M159.22 332.57V350.21M159.96 318.48V333.3M160.69 308.06V319.21M161.42 304.16V308.79M162.15 307.07V317.5M162.88 316.77V331.23M163.62 330.49V347.52M164.35 346.79V364.78M165.08 364.05V380.47M165.81 379.73V393.42M166.54 392.69V401.79M167.28 396.79V403.16M168.01 385.79V397.52M168.74 371.46V386.52M169.47 355.07V372.19M170.2 338.83V355.8M170.94 324.36V339.56M171.67 313.35V325.09M172.4 307.41V314.09M173.13 308.47V317.1M173.87 316.37V329.42M174.6 328.68V344.5M175.33 343.77V360.8M176.06 360.07V376.46M176.79 375.73V389.68M177.53 388.94V398.96M178.26 397.4V401.99M178.99 386.58V398.14M179.72 372.02V387.31M180.45 354.29V372.75M181.19 334.93V355.02M181.92 315.26V335.66M182.65 296.92V315.99M183.38 281.02V297.66M184.11 269.14V281.75M184.85 262.23V269.87M185.58 263.78V275.06M186.31 274.32V285.75M187.04 285.02V296.29M187.77 295.56V306.21M188.51 305.47V313.3M189.24 312.57V320.08M189.97 319.35V326.71M190.7 325.97V333.49M191.43 332.75V339.08M192.17 338.34V342.4M192.9 341.67V345.09M193.63 344.35V347.49M194.36 346.76V349.89M195.1 349.16V352.25M195.83 351.52V354.47M196.56 353.74V356.52M197.29 355.78V358.32M198.02 357.59V360.07M198.76 359.34V361.81M199.49 361.08V363.7M200.22 362.97V365.62M200.95 364.89V367.95M201.68 367.22V371.37M202.42 370.64V375.12M203.15 374.38V379.02M203.88 378.28V382.92M204.61 382.19V388.39M205.34 387.66V400.14M206.08 399.41V412.68M206.81 411.94V424.5M207.54 423.77V435.62M208.27 434.88V446.73M209 446V452.37M209.74 440.4V449.35M210.47 429.54V441.13M211.2 415.8V430.27M211.93 400.44V416.53M212.66 383.97V401.17M213.4 367.47V384.71M214.13 351.65V368.2M214.86 337.49V352.38M215.59 325.44V338.23M216.33 316.3V326.18M217.06 310.86V317.04M217.79 311.91V320.77M218.52 320.04V333.27M219.25 332.54V348.53M219.99 347.79V365.07M220.72 364.34V380.65M221.45 379.91V393.75M222.18 393.01V402.49M222.91 399.35V404.59M223.65 388.77V400.08M224.38 374.59V389.5M225.11 358.35V375.32M225.84 342.1V359.08M226.57 327.45V342.83M227.31 316.58V328.19M228.04 310.71V317.31M228.77 311.9V320.74M229.5 320.01V333.34M230.23 332.61V348.69M230.97 347.96V365.17M231.7 364.44V380.69M232.43 379.95V393.59M233.16 392.85V402.14M233.89 398.55V404.09M234.63 387.98V399.28M235.36 373.81V388.72M236.09 357.59V374.54M236.82 341.2V358.32M237.55 326.73V341.94M238.29 315.86V327.46M239.02 310.3V316.6M239.75 311.68V320.51M240.48 319.78V333.05M241.22 332.31V348.15M241.95 347.42V364.37M242.68 363.64V379.64M243.41 378.9V392.47M244.14 391.74V400.71M244.88 396.96V402.55M245.61 386.57V397.69M246.34 372.66V387.3M247.07 356.75V373.39M247.8 340.98V357.48M248.54 326.92V341.71M249.27 316.38V327.65M250 311.07V317.11M250.73 312.46V321.49M251.46 320.76V334.26M252.2 333.53V349.43M252.93 348.7V365.82M253.66 365.09V381.14M254.39 380.41V393.91M255.12 393.18V402.21M255.86 398.14V403.9M256.59 387.56V398.87M257.32 373.59V388.29M258.05 357.61V374.32M258.78 341.77V358.34M259.52 327.66V342.51M260.25 317.23V328.39M260.98 312.04V317.96M261.71 313.55V322.38M262.45 321.65V334.79M263.18 334.05V349.87M263.91 349.14V365.74M264.64 365.01V380.67M265.37 379.94V393.08M266.11 392.35V401.18M266.84 396.85V402.69M267.57 386.57V397.59M268.3 372.76V387.3M269.03 357.25V373.49M269.77 341.74V357.98M270.5 328.09V342.47M271.23 317.8V328.82M271.96 312.85V318.53M272.69 314.49V323.26M273.43 322.53V335.66M274.16 334.93V350.53M274.89 349.8V366.43M275.62 365.7V381.16M276.35 380.43V393.4M277.09 392.67V401.29M277.82 396.93V402.78M278.55 386.44V397.66M279.28 372.62V387.17M280.01 356.98V373.36M280.75 341.33V357.71M281.48 327.66V342.06M282.21 317.32V328.4M282.94 312.5V318.05M283.67 314.16V323.17M284.41 322.44V335.76M285.14 335.03V350.74M285.87 350.01V366.81M286.6 366.08V381.63M287.34 380.9V393.92M288.07 393.19V401.9M288.8 397.44V403.41M289.53 387.05V398.17M290.26 373.3V387.78M291 357.85V374.03M291.73 342.41V358.58M292.46 328.81V343.14M293.19 318.71V329.54M293.92 313.94V319.45M294.66 315.61V324.27M295.39 323.54V336.46M296.12 335.73V350.95M296.85 350.21V366.49M297.58 365.76V380.83M298.32 380.09V392.72M299.05 391.98V400.35M299.78 395.81V401.71M300.51 385.68V396.54M301.24 372.1V386.41M301.98 356.86V372.83M302.71 341.78V357.59M303.44 328.5V342.51M304.17 318.51V329.24M304.9 313.95V319.24M305.64 315.63V324.47M306.37 323.74V336.55M307.1 335.82V351.09M307.83 350.36V366.69M308.57 365.96V381.08M309.3 380.35V393.01M310.03 392.28V400.67M310.76 396.18V402.04M311.49 386.16V396.91M312.23 372.75V386.89M312.96 357.55V373.48M313.69 342.65V358.28M314.42 329.4V343.38M315.15 319.53V330.13M315.89 315.01V320.26M316.62 316.67V325.28M317.35 324.55V337.38M318.08 336.64V351.76M318.81 351.02V367.19M319.55 366.46V381.42M320.28 380.69V393.23M321.01 392.49V400.8M321.74 396.25V402.16M322.47 386.01V396.99M323.21 372.33V386.74M323.94 357.13V373.06M324.67 341.79V357.87M325.4 328.41V342.52M326.13 318.48V329.15M326.87 313.76V319.21M327.6 315.44V324.19M328.33 323.45V336.4M329.06 335.67V351.09M329.8 350.36V366.7M330.53 365.97V381.24M331.26 380.5V393.3M331.99 392.57V401.02M332.72 396.47V402.4M333.46 386.18V397.2M334.19 372.51V386.91M334.92 357.18V373.24M335.65 341.85V357.91M336.38 328.47V342.58M337.12 318.33V329.2M337.85 313.59V319.06M338.58 315.24V323.84M339.31 323.11V335.7M340.04 334.97V350.13M340.78 349.4V365.47M341.51 364.74V379.6M342.24 378.87V391.46M342.97 390.73V399.17M343.7 394.9V400.52M344.44 385.17V395.63M345.17 372.14V385.91M345.9 357.36V372.87M346.63 342.72V358.09M347.36 329.84V343.45M348.1 320.11V330.57M348.83 315.53V320.84M349.56 317.04V325.3M350.29 324.56V336.83M351.02 336.09V350.58M351.76 349.84V365.4M352.49 364.67V379.15M353.22 378.42V390.53M353.95 389.8V397.91M354.69 393.99V399.42M355.42 384.34V394.72M356.15 371.35V385.07M356.88 356.74V372.08M357.61 342.29V357.48M358.35 329.45V343.02M359.08 319.8V330.18M359.81 315.1V320.54M360.54 316.46V324.69M361.27 323.96V336.12M362.01 335.39V349.89M362.74 349.15V364.66M363.47 363.93V378.27M364.2 377.54V389.86M364.93 389.12V397.21M365.67 393.49V398.71M366.4 383.91V394.22M367.13 371.36V384.64M367.86 357.06V372.09M368.59 342.77V357.8M369.33 330.07V343.5M370.06 320.65V330.8M370.79 315.85V321.38M371.52 317.21V325.36M372.25 324.63V336.8M372.99 336.07V350.62M373.72 349.89V365.53M374.45 364.8V379.36M375.18 378.63V390.95M375.92 390.22V398.52M376.65 395.06V400.19M377.38 385.4V395.79M378.11 372.57V386.14M378.84 358.11V373.3M379.58 343.5V358.84M380.31 330.51V344.23M381.04 320.86V331.24M381.77 315.85V321.59M382.5 317.07V325.22M383.24 324.49V336.67M383.97 335.94V350.35M384.7 349.62V365.27M385.43 364.53V379.26M386.16 378.52V390.86M386.9 390.12V398.43M387.63 395.24V400.25M388.36 385.67V395.97M389.09 372.8V386.41M389.82 358.18V373.54M390.56 343.57V358.92M391.29 330.4V344.3M392.02 320.53V331.13M392.75 315.34V321.26M393.48 316.41V324.4M394.22 323.67V335.84M394.95 335.11V349.5M395.68 348.77V364.4M396.41 363.67V378.37M397.14 377.64V389.96M397.88 389.23V397.67M398.61 394.86V399.64M399.34 385.51V395.59M400.07 373.08V386.24M400.81 358.78V373.81M401.54 344.33V359.51M402.27 331.31V345.06M403 321.63V332.05M403.73 316.24V322.37M404.47 317.13V324.99M405.2 324.26V336.04M405.93 335.31V349.42M406.66 348.69V364.02M407.39 363.29V377.87M408.13 377.14V389.36M408.86 388.63V397.12M409.59 394.73V399.21M410.32 385.42V395.46M411.05 373.02V386.15M411.79 358.76V373.75M412.52 344.36V359.49M413.25 331.38V345.09M413.98 321.63V332.11M414.71 316.04V322.36M415.45 316.8V324.59M416.18 323.86V335.56M416.91 334.83V349.05M417.64 348.32V363.85M418.37 363.11V377.76M419.11 377.03V389.5M419.84 388.77V397.49M420.57 395.62V399.74M421.3 386.4V396.35M422.04 374.4V387.13M422.77 360.21V375.13M423.5 346.02V360.94M424.23 333.1V346.75M424.96 323.31V333.83M425.7 317.48V324.04M426.43 317.94V325.61M427.16 324.88V336.04M427.89 335.3V349.05M428.62 348.32V363.28M429.36 362.54V376.92M430.09 376.18V388.39M430.82 387.66V396.22M431.55 394.7V398.66M432.28 385.76V395.43M433.02 373.92V386.49M433.75 359.97V374.65M434.48 345.73V360.7M435.21 332.74V346.46M435.94 323.01V333.47M436.68 316.92V323.74M437.41 317.22V324.64M438.14 323.91V334.92M438.87 334.19V347.79M439.6 347.05V361.9M440.34 361.17V375.44M441.07 374.71V386.81M441.8 386.08V394.87M442.53 393.7V397.44M443.27 385.22V394.43M444 373.58V385.95M444.73 359.99V374.31M445.46 346.02V360.72M446.19 333.33V346.75M446.93 323.39V334.07M447.66 317.18V324.12M448.39 317.33V324.6M449.12 323.87V334.93M449.85 334.2V347.89M450.59 347.16V362.18M451.32 361.44V376.05M452.05 375.32V387.59M452.78 386.86V396.07M453.51 395.34V398.83M454.25 386.99V396.1M454.98 375.43V387.72M455.71 361.71V376.16M456.44 347.71V362.44M457.17 334.78V348.44M457.91 324.81V335.51M458.64 318.25V325.54M459.37 318.1V325.25M460.1 324.52V335.32M460.83 334.59V348.34M461.57 347.61V362.63M462.3 361.9V376.63M463.03 375.9V388.36M463.76 387.63V397.03M464.49 396.3V400.11M465.23 388.01V397.49M465.96 375.92V388.74M466.69 361.48V376.65M467.42 346.43V362.21M468.16 332.82V347.17M468.89 322.01V333.55M469.62 314.93V322.74M470.35 314.47V321.67M471.08 320.94V332.12M471.82 331.39V345.78M472.55 345.05V360.93M473.28 360.2V375.63M474.01 374.9V388.23M474.74 387.5V397.62M475.48 396.88V401.21M476.21 389.37V398.78M476.94 377.17V390.11M477.67 362.38V377.9M478.4 346.98V363.11M479.14 332.79V347.71M479.87 321.48V333.52M480.6 314.16V322.22M481.33 313.4V320.3M482.06 319.57V330.87M482.8 330.14V344.99M483.53 344.26V360.65M484.26 359.92V376M484.99 375.26V389.18M485.72 388.45V399.17M486.46 398.44V403.21M487.19 391.5V400.91M487.92 378.68V392.23M488.65 363.28V379.41M489.39 347.07V364.01M490.12 332.14V347.81M490.85 320.06V332.88M491.58 312.13V320.8M492.31 311.06V317.8M493.05 317.07V328.66M493.78 327.92V343.28M494.51 342.54V359.5M495.24 358.76V375.56M495.97 374.82V389.56M496.71 388.83V400.12M497.44 399.39V404.77M498.17 393.37V402.8M498.9 380.33V394.1M499.63 364.48V381.06M500.37 347.8V365.21M501.1 332.42V348.53M501.83 319.52V333.15M502.56 311.27V320.25M503.29 309.75V315.97M504.03 315.24V326.87M504.76 326.14V341.46M505.49 340.73V357.84M506.22 357.1V374.21M506.95 373.47V388.65M507.69 387.92V399.55M508.42 398.81V404.88M509.15 394.35V403.38M509.88 381.54V395.08M510.61 366.1V382.27M511.35 349.69V366.84M512.08 334.25V350.42M512.81 321.29V334.99M513.54 312.84V322.02M514.28 311.04V316.61M515.01 315.88V327.4M515.74 326.66V341.61M516.47 340.88V357.86M517.2 357.13V374.11M517.94 373.38V388.62M518.67 387.89V399.55M519.4 398.82V405.46M520.13 395.28V404.23M520.86 382.39V396.02M521.6 366.84V383.12M522.33 349.89V367.57M523.06 333.89V350.62M523.79 320.69V334.62M524.52 311.58V321.42M525.26 309.27V314.36M525.99 313.63V325.28M526.72 324.55V339.61M527.45 338.87V356.31M528.18 355.58V373.18M528.92 372.45V388.4M529.65 387.67V399.89M530.38 399.15V406.53M531.11 396.97V405.77M531.84 384.41V397.71M532.58 369.02V385.14M533.31 352.25V369.75M534.04 336.13V352.98M534.77 322.64V336.86M535.51 313.25V323.37M536.24 310.48V315.04M536.97 314.31V325.43M537.7 324.7V339.32M538.43 338.59V355.66M539.17 354.93V372.24M539.9 371.51V387.39M540.63 386.65V398.83M541.36 398.1V406.12M542.09 397.07V405.82M542.83 384.86V397.8M543.56 369.25V385.59M544.29 352.36V369.98M545.02 335.84V353.09M545.75 322.13V336.57M546.49 312.28V322.87M547.22 308.98V313.22M547.95 312.48V323.48M548.68 322.75V337.63M549.41 336.9V354.34M550.15 353.61V371.55M550.88 370.82V387.36M551.61 386.62V399.53M552.34 398.8V407.58M553.07 399.31V407.73M553.81 387.37V400.04M554.54 371.72V388.11M555.27 354.75V372.45M556 338.02V355.48M556.73 323.88V338.75M557.47 313.48V324.62M558.2 309.7V314.21M558.93 312.61V323.36M559.66 322.63V337.27M560.4 336.54V354.05M561.13 353.32V371.35M561.86 370.62V387.22M562.59 386.49V399.9M563.32 399.17V408.14M564.06 401.1V408.91M564.79 389.24V401.83M565.52 373.54V389.98M566.25 356.18V374.28M566.98 339.07V356.91M567.72 324.45V339.81M568.45 313.47V325.18M569.18 309V314.21M569.91 311.45V321.6M570.64 320.87V335.34M571.38 334.61V351.95M572.11 351.22V369.24M572.84 368.51V385.24M573.57 384.51V398.37M574.3 397.64V406.9M575.04 401.06V408.12M575.77 389.31V401.79M576.5 373.69V390.04M577.23 356.21V374.42M577.96 338.88V356.95M578.7 323.72V339.61M579.43 312.42V324.45M580.16 307.14V313.15M580.89 309.12V318.98M581.63 318.25V333.05M582.36 332.31V349.77M583.09 349.04V367.66M583.82 366.93V384.23M584.55 383.5V398.15M585.29 397.42V407.13M586.02 402.63V408.95M586.75 391.14V403.36M587.48 375.78V391.87M588.21 358.4V376.52M588.95 341.02V359.13M589.68 325.51V341.75M590.41 313.72V326.24M591.14 307.67V314.45M591.87 309.06V318.78M592.61 318.05V332.68M593.34 331.95V349.42M594.07 348.69V367.57M594.8 366.84V384.74M595.53 384.01V399.09M596.27 398.36V408.66M597 405.51V411.13M597.73 393.66V406.24M598.46 378V394.39M599.19 359.86V378.73M599.93 341.39V360.59M600.66 324.86V342.12M601.39 312.39V325.6M602.12 305.08V313.12M602.86 305.83V315.38M603.59 314.65V328.94M604.32 328.21V345.78M605.05 345.05V364.14M605.78 363.41V381.63M606.52 380.9V396.36M607.25 395.63V406.55M607.98 404.9V409.72M608.71 393.6V405.63M609.44 378.35V394.34M610.18 360.55V379.08M610.91 342.18V361.29M611.64 325.57V342.92M612.37 312.75V326.3M613.1 304.6V313.48M613.84 304.75V314.15M614.57 313.41V327.37M615.3 326.63V344.14M616.03 343.4V362.61M616.76 361.88V380.54M617.5 379.81V395.6M618.23 394.87V406.67M618.96 405.94V410.49M619.69 395.47V406.98M620.42 380.55V396.21M621.16 362.62V381.28M621.89 344.13V363.35M622.62 327.17V344.87M623.35 313.84V327.91M624.08 305.17V314.57M624.82 304.56V313.25M625.55 312.52V326.1M626.28 325.37V343.06M627.01 342.33V361.67M627.75 360.93V379.99M628.48 379.26V395.62M629.21 394.89V407.39M629.94 406.66V412.04M630.67 397.95V409.15M631.41 382.82V398.68M632.14 364.73V383.56M632.87 345.62V365.47M633.6 328.14V346.35M634.33 313.77V328.87M635.07 304.51V314.51M635.8 303.3V310.95M636.53 310.22V323.39M637.26 322.66V340.11M637.99 339.38V358.78M638.73 358.05V377.16M639.46 376.43V393.45M640.19 392.71V405.56M640.92 404.83V411.13M641.65 398.63V409.02M642.39 383.75V399.36M643.12 365.91V384.48M643.85 347.06V366.65M644.58 329.38V347.79M645.31 314.65V330.11M646.05 304.99V315.38M646.78 303.03V309.7M647.51 308.97V322.09M648.24 321.36V338.55M648.98 337.82V357.45M649.71 356.72V376.35M650.44 375.62V393.26M651.17 392.53V405.82M651.9 405.08V412.66M652.64 401.16V411.28M653.37 386.58V401.89M654.1 368.7V387.31M654.83 349.46V369.43M655.56 331.26V350.19M656.3 315.91V332M657.03 305.51V316.64M657.76 302.75V308.33M658.49 307.59V320.63M659.22 319.9V337.12M659.96 336.38V356.25M660.69 355.52V375.68M661.42 374.95V393.24M662.15 392.51V406.61M662.88 405.87V414.75M663.62 404.2V414.14M664.35 389.9V404.93M665.08 371.81V390.63M665.81 352.32V372.54M666.54 333.28V353.05M667.28 317.5V334.01M668.01 306.05V318.23M668.74 302.41V307.07M669.47 306.34V318.75M670.2 318.02V334.75M670.94 334.02V353.7M671.67 352.97V373.24M672.4 372.51V390.9M673.13 390.17V404.92M673.87 404.19V413.89M674.6 404.81V414.19M675.33 391.08V405.55M676.06 373.26V391.81M676.79 353.72V373.99M677.53 334.47V354.45M678.26 318.19V335.2M678.99 306.12V318.93M679.72 301.55V306.85M680.45 304.78V316.6M681.19 315.87V332.45M681.92 331.72V351.49M682.65 350.75V371.41M683.38 370.68V389.72M684.11 388.99V404.49M684.85 403.75V414.1M685.58 406.86V415.18M686.31 393.29V407.59M687.04 375.25V394.02M687.77 355.27V375.98M688.51 335.45V356M689.24 318.16V336.18M689.97 305.17V318.89M690.7 299.4V305.9M691.43 301.86V313.17M692.17 312.43V329.18M692.9 328.45V348.52M693.63 347.79V368.93M694.36 368.2V388.12M695.1 387.39V403.99M695.83 403.26V414.27M696.56 409.44V416.42M697.29 396.27V410.18M698.02 378.63V397M698.76 358.75V379.36M699.49 338.72V359.48M700.22 320.93V339.45M700.95 307.47V321.66M701.68 300.31V308.2M702.42 301.69V312.54M703.15 311.81V328M703.88 327.27V346.94M704.61 346.2V367.39M705.34 366.66V386.77M706.08 386.04V403M706.81 402.27V414.01M707.54 411.39V417.07M708.27 398.42V412.12M709 381.09V399.16M709.74 361.03V381.82M710.47 340.66V361.76M711.2 322.11V341.39M711.93 308.1V322.84M712.66 299.38V308.83M713.4 299.84V310.3M714.13 309.57V324.99M714.86 324.26V343.75M715.59 343.02V364.18M716.33 363.45V384M717.06 383.26V400.59M717.79 399.86V412.54M718.52 411.7V416.53M719.25 399.4V412.44M719.99 382.55V400.13M720.72 362.33V383.28M721.45 341.63V363.06M722.18 322.64V342.37M722.91 307.63V323.37M723.65 297.83V308.36M724.38 297.37V306.9M725.11 306.16V321.15M725.84 320.42V339.77M726.57 339.03V360.36M727.31 359.63V380.65M728.04 379.92V397.95M728.77 397.22V410.87M729.5 410.14V416.01M730.23 400.95V413.01M730.97 384.67V401.69M731.7 365.04V385.4M732.43 344.49V365.77M733.16 325.47V345.22M733.89 309.79V326.2M734.63 299.68V310.52M735.36 298.18V306.11M736.09 305.38V319.64M736.82 318.91V337.7M737.55 336.97V357.88M738.29 357.15V378.05M739.02 377.32V395.81M739.75 395.08V409.05M740.48 408.32V415.64M741.22 402.45V413.68M741.95 386.43V403.18M742.68 367.05V387.16M743.41 346.27V367.78M744.14 326.73V347.01M744.88 310.43V327.47M745.61 299.48V311.16M746.34 296.91V303.39M747.07 302.66V316.64M747.8 315.91V334.27M748.54 333.53V354.59M749.27 353.86V375.23M750 374.49V393.72M750.73 392.99V407.57M751.46 406.84V415.76M752.2 404.13V414.86M752.93 388.98V404.86M753.66 370.01V389.71M754.39 349.29V370.74M755.12 329.48V350.02M755.86 312.8V330.21M756.59 301.12V313.53M757.32 297.35V302.46M758.05 301.73V315.06M758.78 314.33V332.05M759.52 331.32V352.16M760.25 351.43V372.73M760.98 372V391.48M761.71 390.74V406.16M762.45 405.42V415.7M763.18 405.87V415.85M763.91 391.33V406.6M764.64 372.72V392.06M765.37 352.13V373.45M766.11 331.86V352.86M766.84 314.86V332.59M767.57 302.09V315.59M768.3 297.26V302.83M769.03 300.55V312.72M769.77 311.99V329.11M770.5 328.37V348.67M771.23 347.94V369.3M771.96 368.57V388.11M772.69 387.38V403.44M773.43 402.71V413.36M774.16 406.51V414.71M774.89 392.89V407.24M775.62 374.82V393.63M776.35 354.65V375.55M777.09 334.6V355.38M777.82 317.13V335.33M778.55 303.98V317.86M779.28 297.72V304.71M780.01 299.85V310.94M780.75 310.21V326.79M781.48 326.05V345.78M782.21 345.05V366.13M782.94 365.4V385.13M783.67 384.39V400.97M784.41 400.24V411.48M785.14 407.48V413.92M785.87 394.7V408.21M786.6 377.67V395.43M787.34 358V378.4M788.07 338.32V358.73M788.8 320.56V339.06M789.53 307.16V321.29M790.26 299.51V307.89M791 300.42V310.65M791.73 309.92V325.13M792.46 324.4V343.14M793.19 342.41V362.6M793.92 361.87V381.48M794.66 380.74V397.22M795.39 396.49V408.2M796.12 406.82V411.68M796.85 395.22V407.56M797.58 379.51V395.95M798.32 360.92V380.25M799.05 341.89V361.65M799.78 324.68V342.62M800.51 311.06V325.41M801.24 302.28V311.79M801.98 302.13V311.39M802.71 310.66V324.71M803.44 323.98V341.84M804.17 341.11V360.78M804.9 360.05V379.29M805.64 378.55V394.92M806.37 394.18V406.77M807.1 406.04V411.18M807.83 396.86V408.13M808.57 381.61V397.6M809.3 363.35V382.34M810.03 344.35V364.08M810.76 326.7V345.08M811.49 312.47V327.43M812.23 303.15V313.2M812.96 301.77V309.2M813.69 308.47V321.34M814.42 320.61V337.69M815.15 336.96V355.82M815.89 355.09V373.94M816.62 373.21V389.85M817.35 389.12V401.84M818.08 401.1V407.63M818.81 396.11V405.93M819.55 382.11V396.84M820.28 365.26V382.84M821.01 347.39V366M821.74 330.39V348.13M822.47 316.24V331.12M823.21 306.86V316.97M823.94 304.55V310.08M824.67 309.35V321.29M825.4 320.56V336.13M826.13 335.39V353.22M826.87 352.49V370.49M827.6 369.76V386.2M828.33 385.46V398.04M829.06 397.31V405.1M829.8 395.55V404.49M830.53 382.91V396.28M831.26 367.09V383.64M831.99 350V367.82M832.72 333.43V350.74M833.46 319.42V334.16M834.19 309.59V320.15M834.92 306.23V310.46M835.65 309.73V320.6M836.38 319.87V334.5M837.12 333.76V351.15M837.85 350.42V368.33M838.58 367.6V383.91M839.31 383.18V396.19M840.04 395.46V404.22M840.78 396.05V404.67M841.51 383.88V396.78M842.24 367.7V384.61M842.97 349.04V368.43M843.7 329.17V349.77M844.44 309.61V329.9M845.17 291.72V310.35M845.9 277.27V292.45M846.63 266.33V278.01M847.36 262.23V267.62M848.1 266.88V278.31M848.83 277.58V288.85M849.56 288.12V299.39M850.29 298.66V308.52M851.02 307.79V315.3M851.76 314.57V322.08M852.49 321.35V328.71M853.22 327.98V335.49M853.95 334.76V340.19M854.69 339.45V343.14M855.42 342.41V345.69M856.15 344.95V348.24M856.88 347.51V350.64M857.61 349.9V352.97M858.35 352.24V355.07M859.08 354.34V356.97M859.81 356.24V358.91M860.54 358.18V360.65M861.27 359.92V362.39M862.01 361.66V364.14M862.74 363.41V366.24M863.47 365.5V368.91M864.2 368.18V372.42M864.93 371.69V376.32M865.67 375.58V380.07M866.4 379.33V384.28M867.13 383.54V391.47M867.86 390.74V403.85M868.59 403.12V416.39M869.33 415.65V427.85M870.06 427.12V438.97M870.79 438.23V450.08M871.52 446.73V452.37M872.25 438.23V447.46M872.99 426.9V438.96M873.72 413.49V427.63M874.45 398.46V414.22M875.18 382.62V399.19M875.92 366.78V383.35M876.65 351.75V367.52M877.38 338.19V352.48M878.11 327.01V338.92M878.84 318.36V327.75M879.58 313.31V319.09M880.31 314.52V323.08M881.04 322.35V335.37M881.77 334.64V350.2M882.5 349.47V366.29M883.24 365.55V381.43M883.97 380.69V394.02M884.7 393.29V402.31M885.43 398.78V404.27M886.16 388.28V399.51M886.9 374.38V389.02M887.63 358.3V375.11M888.36 342.37V359.03M889.09 328.01V343.1M889.82 317.36V328.74M890.56 311.84V318.1M891.29 313.21V321.96M892.02 321.23V334.46M892.75 333.73V349.48M893.48 348.75V365.55M894.22 364.81V380.72M894.95 379.98V393.22M895.68 392.49V401.54M896.41 397.56V403.21M897.14 386.9V398.29M897.88 372.84V387.64M898.61 356.75V373.57M899.34 340.8V357.48M900.07 326.59V341.53M900.81 315.93V327.32M901.54 310.71V316.66M902.27 312.26V321.31M903 320.58V334.11M903.73 333.38V349.48M904.47 348.75V365.91M905.2 365.18V381.28M905.93 380.55V393.93M906.66 393.2V402.25M907.39 397.83V403.8M908.13 387.14V398.56M908.86 372.87V387.87M909.59 356.73V373.61M910.32 340.73V357.46M911.05 326.62V341.46M911.79 315.93V327.35M912.52 311V316.66M913.25 312.8V321.99M913.98 321.26V334.98M914.71 334.25V350.56M915.45 349.82V367.21M916.18 366.47V382.64M916.91 381.9V395.32M917.64 394.59V403.63M918.37 398.65V404.98M919.11 387.72V399.38M919.84 373.06V388.45M920.57 356.67V373.8M921.3 340.28V357.4M922.04 326.06V341.01M922.77 315.43V326.79M923.5 310.59V316.16M924.23 312.43V321.7M924.96 320.97V334.53M925.7 333.8V349.94M926.43 349.21V366.16M927.16 365.43V381.26M927.89 380.52V393.64M928.62 392.91V401.59M929.36 396.49V402.81M930.09 385.86V397.22M930.82 371.74V386.59M931.55 356.09V372.47M932.28 340.59V356.82M933.02 327.06V341.32M933.75 316.86V327.79M934.48 312.5V317.6M935.21 314.63V323.84M935.94 323.11V336.68M936.68 335.95V352.02M937.41 351.29V368.12M938.14 367.39V383.03M938.87 382.3V395.1M939.6 394.37V402.98M940.34 397.15V404.05M941.07 386.14V397.88M941.8 371.36V386.87M942.53 355.12V372.09M943.27 338.9V355.86M944 325.04V339.64M944.73 314.48V325.77M945.46 310.27V315.21" stroke="#ffff00" stroke-width="1.0" fill="none"/>
<path d="M22.7 392.4H946.3" stroke="#f0bc5c" stroke-width="1.3" fill="none"/>
<rect x="22.7" y="47.6" width="923.6" height="512.2" fill="none" stroke="#e6e6e6" stroke-width="1.4"/>
<!-- mini overview -->
<path d="M430.2 15.6h-1.6v12h1.6M537.9 15.6h1.6v12h-1.6" stroke="#18c0d8" stroke-width="1.3" fill="none"/>
<path d="M429.8 22.4 L431.7 20.3 L436.05 24.6 L440.39 20.3 L444.74 24.6 L449.08 20.3 L453.43 24.6 L457.77 20.3 L462.12 24.6 L466.46 20.3 L470.81 24.6 L475.15 20.3 L479.5 24.6 L483.84 20.3 L488.19 24.6 L492.53 20.3 L496.88 24.6 L501.22 20.3 L505.56 24.6 L509.91 20.3 L514.25 24.6 L518.6 20.3 L522.95 24.6 L527.29 20.3 L531.64 24.6 L535.98 20.3 L538.4 22.4" stroke="#10b010" stroke-width="1.2" fill="none" stroke-linejoin="round"/>
<!-- trigger pos marker -->
<path d="M452 34h9.6v8.2l-4.8 4.5l-4.8-4.5z" fill="#ff8c10"/>
<!-- left markers -->
<path d="M6 244.2h10.2l4.4 4.9l-4.4 4.9H6z" fill="#14e614"/>
<path d="M6 384h11l3.8 4.6l-3.8 5H6z" fill="#f4f400"/>
<path d="M6 387.6h10.3l4.6 4.9l-4.6 4.9H6z" fill="#ffc456"/>
<!-- right trigger marker -->
<path d="M948 389l5.2-5h9.4v10h-9.4z" fill="#f0f000"/>
<!-- trigger edge icon -->
<path d="M879.4 25.6h4.3v-13h4.4" stroke="#f0f000" stroke-width="1.2" fill="none"/>
<path d="M883.7 16.4l-3 4.6h6z" fill="#f0f000"/>
</svg>
</div>
<div class="abs mk" style="left:454.1px;top:34.8px;font-size:9px;font-weight:normal;">T</div>
<div class="abs mk" style="left:9.2px;top:244.6px;font-style:italic;">4</div>
<div class="abs mk" style="left:10px;top:387.9px;font-size:10px;line-height:10px;">6</div>
<div class="abs" style="left:12.3px;top:385.8px;width:1.4px;height:1.3px;background:#202000;"></div>
<div class="abs mk" style="left:955.3px;top:384.6px;font-weight:normal;font-size:8.5px;">T</div>

<div id="pedge" class="abs"></div>
<div id="panel" class="abs"></div>
<!-- Horizontal group -->
<div class="abs grp" style="top:19.8px;height:93.6px;"></div>
<div class="abs lg" style="left:977px;top:14.1px;">Horizontal</div>
<div class="abs lb" style="top:32.2px;">Time / Div</div>
<div class="abs cb" style="top:48.8px;"><span>10.00ms</span></div>
<div class="abs lb" style="top:73px;">Format</div>
<div class="abs dis" style="top:91px;"><span>Y - T</span></div>
<!-- Vertical group -->
<div class="abs grp" style="top:126.8px;height:107px;"></div>
<div class="abs lg" style="left:977px;top:121.8px;">Vertical</div>
<div class="abs cb" style="top:141.8px;"><span>CH4</span></div>
<div class="abs tf" style="top:166px;"><span style="left:4.6px;">200mV</span></div>
<div class="abs dis" style="top:189.6px;"><span>DC</span></div>
<div class="abs cb" style="top:213.6px;"><span>x1</span></div>
<!-- Trigger group -->
<div class="abs grp" style="top:250.6px;height:172.6px;"></div>
<div class="abs lg" style="left:977.4px;top:245.4px;">Trigger</div>
<div class="abs lb" style="top:267.6px;">Trigger Mode</div>
<div class="abs lb" style="top:293.6px;">Trigger Sweep</div>
<div class="abs lb" style="top:319.4px;">Trigger Source</div>
<div class="abs lb" style="top:344.6px;">Trigger Slope</div>
<!-- Move group -->
<div class="abs grp" style="top:439px;height:99.6px;"></div>
<div class="abs lg" style="left:977.4px;top:433.4px;">Move</div>
<div class="abs lb" style="top:454px;">Length</div>
<div class="abs lb" style="top:481.8px;">Step</div>
<div class="abs cb" style="left:980.2px;top:512px;height:15.8px;border-color:#707070;"><span style="left:8px;top:2.2px;">|&lt;</span></div>
<!-- Record group -->
<div class="abs grp" style="top:552px;height:30px;"></div>
<div class="abs lg" style="left:977.4px;top:546.6px;">Record</div>
</body>
</html>
